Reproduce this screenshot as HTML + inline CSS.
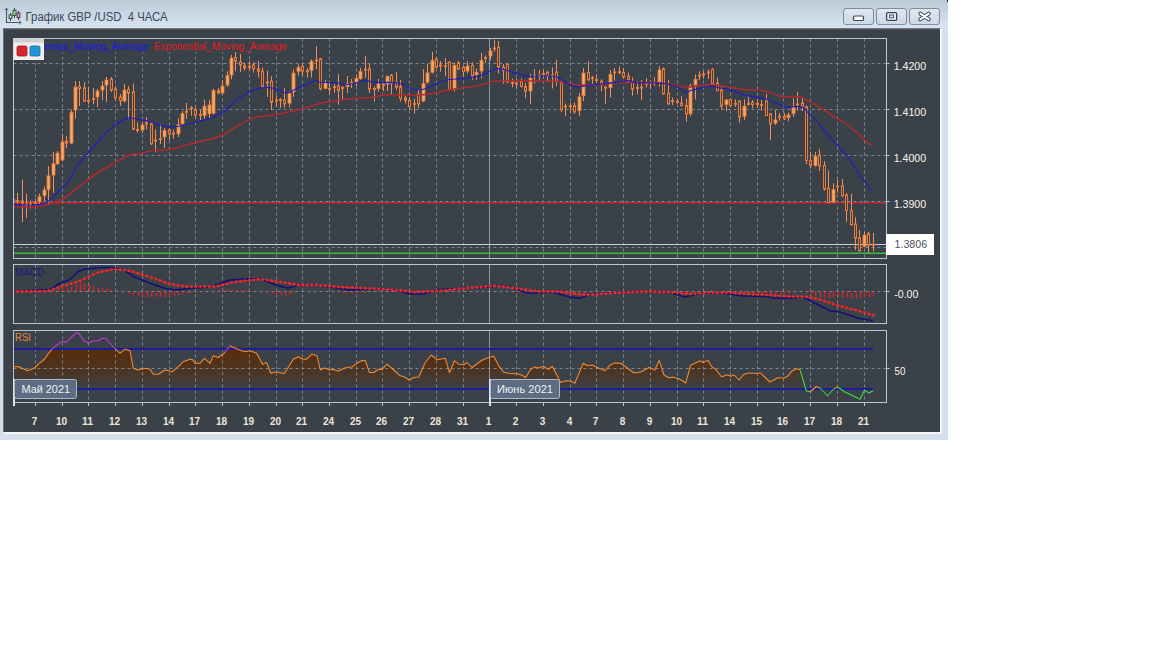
<!DOCTYPE html>
<html><head><meta charset="utf-8">
<style>
html,body{margin:0;padding:0;background:#ffffff;width:1152px;height:648px;overflow:hidden;}
#win{position:absolute;left:0;top:0;width:948px;height:440px;background:#d3dfeb;}
#tb{position:absolute;left:0;top:0;width:948px;height:28px;background:linear-gradient(#bccad8,#d8e4f0);}
#title{position:absolute;left:25px;top:10px;font:12px "Liberation Sans",sans-serif;color:#3c4459;white-space:pre;}
.btn{position:absolute;top:8px;width:29px;height:15px;border:1px solid #7f8a9a;border-radius:3px;background:linear-gradient(#dfe7f0,#cdd9e6);}
#dark{position:absolute;left:3px;top:28px;width:937px;height:404px;background:#3b4148;border-left:1px solid #6c7278;box-sizing:border-box;}
#shade{position:absolute;left:3px;top:28px;width:937px;height:2px;background:linear-gradient(#80858a,#3b4148);}
#wr{position:absolute;left:940px;top:29px;width:2px;height:404px;background:#f4f7fa;}
#wb{position:absolute;left:4px;top:432px;width:938px;height:2px;background:#f4f7fa;}
svg{position:absolute;left:0;top:0;}
text{font-family:"Liberation Sans",sans-serif;}
.pl{font-size:11px;fill:#faf6ec;}
.cp{font-size:11.5px;fill:#4c5262;}
.lg{font-size:11px;}
.ind{font-size:10.5px;}
.ml{font-size:11.5px;fill:#eef2f6;}
.dl{font-size:11px;font-weight:bold;fill:#ece6d8;text-anchor:middle;}
</style></head><body>
<div id="win">
<div id="tb"></div>
<svg width="30" height="30" style="left:0;top:0" viewBox="0 0 30 30">
<path d="M6.5 9 V22.5 H20.5" fill="none" stroke="#4a5566" stroke-width="1.1"/>
<path d="M4.8 10.2 L6.5 8.2 L8.2 10.2 M19.2 20.8 L21.2 22.5 L19.2 24.2" fill="none" stroke="#4a5566" stroke-width="1"/>
<line x1="10.5" y1="13" x2="10.5" y2="21" stroke="#33413c" stroke-width="1"/><rect x="9" y="15" width="3" height="3.6" fill="#a8dcb0" stroke="#2e4a38" stroke-width="0.9"/>
<line x1="14.5" y1="8" x2="14.5" y2="18" stroke="#33413c" stroke-width="1"/><rect x="13" y="10.2" width="3" height="5.4" fill="#9ad2a2" stroke="#2e4a38" stroke-width="0.9"/>
<line x1="18.5" y1="11" x2="18.5" y2="20" stroke="#3e3a40" stroke-width="1"/><rect x="17" y="13" width="3" height="4.6" fill="#c0a0aa" stroke="#4a3842" stroke-width="0.9"/>
</svg>
<svg width="200" height="28" style="left:0;top:0"><text x="25.6" y="21" textLength="142" lengthAdjust="spacingAndGlyphs" style="font-size:12px;fill:#3c4459;white-space:pre" xml:space="preserve">График GBP /USD  4 ЧАСА</text></svg>
<div class="btn" style="left:843px"></div>
<div class="btn" style="left:876px"></div>
<div class="btn" style="left:909px"></div>
<svg width="948" height="30" style="left:0;top:0" viewBox="0 0 948 30">
<rect x="853.5" y="16" width="10" height="4.5" rx="1.3" fill="#ffffff" stroke="#3a4252" stroke-width="1.2"/>
<rect x="886.6" y="12.6" width="10" height="7.8" rx="1.2" fill="#f4f6f8" stroke="#3a4252" stroke-width="1.3"/>
<rect x="889.5" y="15" width="4.2" height="2.8" fill="#dfe4ea" stroke="#3a4252" stroke-width="0.9"/>
<path d="M920.3 13.6 L928.8 19.4 M928.8 13.6 L920.3 19.4" stroke="#3a4252" stroke-width="4" stroke-linecap="round"/>
<path d="M920.3 13.6 L928.8 19.4 M928.8 13.6 L920.3 19.4" stroke="#ffffff" stroke-width="2" stroke-linecap="round"/>
<rect x="947" y="0" width="1" height="2" fill="#202020"/>
</svg>
<div id="dark"></div><div id="shade"></div><div id="wr"></div><div id="wb"></div>
</div>
<svg width="1152" height="648" viewBox="0 0 1152 648">
<defs>
<clipPath id="cm"><rect x="13.5" y="38.5" width="873.0" height="220.0"/></clipPath>
<clipPath id="cmacd"><rect x="13.5" y="264.5" width="873.0" height="59.0"/></clipPath>
<clipPath id="crsi"><rect x="13.5" y="330.5" width="873.0" height="72.0"/></clipPath>
<linearGradient id="rsig" gradientUnits="userSpaceOnUse" x1="0" y1="349" x2="0" y2="390"><stop offset="0" stop-color="#5a2c08" stop-opacity="0.95"/><stop offset="0.45" stop-color="#5a2c08" stop-opacity="0.65"/><stop offset="1" stop-color="#5a2c08" stop-opacity="0.0"/></linearGradient>
<clipPath id="rsiband"><rect x="13" y="349" width="874" height="60"/></clipPath>
</defs>
<g clip-path="url(#cm)">
<line x1="35.5" y1="38.5" x2="35.5" y2="258.5" stroke="#7d8691" stroke-width="1" stroke-dasharray="3,3"/>
<line x1="62.5" y1="38.5" x2="62.5" y2="258.5" stroke="#7d8691" stroke-width="1" stroke-dasharray="3,3"/>
<line x1="88.5" y1="38.5" x2="88.5" y2="258.5" stroke="#7d8691" stroke-width="1" stroke-dasharray="3,3"/>
<line x1="115.5" y1="38.5" x2="115.5" y2="258.5" stroke="#7d8691" stroke-width="1" stroke-dasharray="3,3"/>
<line x1="142.5" y1="38.5" x2="142.5" y2="258.5" stroke="#7d8691" stroke-width="1" stroke-dasharray="3,3"/>
<line x1="169.5" y1="38.5" x2="169.5" y2="258.5" stroke="#7d8691" stroke-width="1" stroke-dasharray="3,3"/>
<line x1="195.5" y1="38.5" x2="195.5" y2="258.5" stroke="#7d8691" stroke-width="1" stroke-dasharray="3,3"/>
<line x1="222.5" y1="38.5" x2="222.5" y2="258.5" stroke="#7d8691" stroke-width="1" stroke-dasharray="3,3"/>
<line x1="249.5" y1="38.5" x2="249.5" y2="258.5" stroke="#7d8691" stroke-width="1" stroke-dasharray="3,3"/>
<line x1="276.5" y1="38.5" x2="276.5" y2="258.5" stroke="#7d8691" stroke-width="1" stroke-dasharray="3,3"/>
<line x1="302.5" y1="38.5" x2="302.5" y2="258.5" stroke="#7d8691" stroke-width="1" stroke-dasharray="3,3"/>
<line x1="329.5" y1="38.5" x2="329.5" y2="258.5" stroke="#7d8691" stroke-width="1" stroke-dasharray="3,3"/>
<line x1="356.5" y1="38.5" x2="356.5" y2="258.5" stroke="#7d8691" stroke-width="1" stroke-dasharray="3,3"/>
<line x1="382.5" y1="38.5" x2="382.5" y2="258.5" stroke="#7d8691" stroke-width="1" stroke-dasharray="3,3"/>
<line x1="409.5" y1="38.5" x2="409.5" y2="258.5" stroke="#7d8691" stroke-width="1" stroke-dasharray="3,3"/>
<line x1="436.5" y1="38.5" x2="436.5" y2="258.5" stroke="#7d8691" stroke-width="1" stroke-dasharray="3,3"/>
<line x1="463.5" y1="38.5" x2="463.5" y2="258.5" stroke="#7d8691" stroke-width="1" stroke-dasharray="3,3"/>
<line x1="489.5" y1="38.5" x2="489.5" y2="258.5" stroke="#7d8691" stroke-width="1" stroke-dasharray="3,3"/>
<line x1="516.5" y1="38.5" x2="516.5" y2="258.5" stroke="#7d8691" stroke-width="1" stroke-dasharray="3,3"/>
<line x1="543.5" y1="38.5" x2="543.5" y2="258.5" stroke="#7d8691" stroke-width="1" stroke-dasharray="3,3"/>
<line x1="570.5" y1="38.5" x2="570.5" y2="258.5" stroke="#7d8691" stroke-width="1" stroke-dasharray="3,3"/>
<line x1="596.5" y1="38.5" x2="596.5" y2="258.5" stroke="#7d8691" stroke-width="1" stroke-dasharray="3,3"/>
<line x1="623.5" y1="38.5" x2="623.5" y2="258.5" stroke="#7d8691" stroke-width="1" stroke-dasharray="3,3"/>
<line x1="650.5" y1="38.5" x2="650.5" y2="258.5" stroke="#7d8691" stroke-width="1" stroke-dasharray="3,3"/>
<line x1="677.5" y1="38.5" x2="677.5" y2="258.5" stroke="#7d8691" stroke-width="1" stroke-dasharray="3,3"/>
<line x1="703.5" y1="38.5" x2="703.5" y2="258.5" stroke="#7d8691" stroke-width="1" stroke-dasharray="3,3"/>
<line x1="730.5" y1="38.5" x2="730.5" y2="258.5" stroke="#7d8691" stroke-width="1" stroke-dasharray="3,3"/>
<line x1="757.5" y1="38.5" x2="757.5" y2="258.5" stroke="#7d8691" stroke-width="1" stroke-dasharray="3,3"/>
<line x1="783.5" y1="38.5" x2="783.5" y2="258.5" stroke="#7d8691" stroke-width="1" stroke-dasharray="3,3"/>
<line x1="810.5" y1="38.5" x2="810.5" y2="258.5" stroke="#7d8691" stroke-width="1" stroke-dasharray="3,3"/>
<line x1="837.5" y1="38.5" x2="837.5" y2="258.5" stroke="#7d8691" stroke-width="1" stroke-dasharray="3,3"/>
<line x1="864.5" y1="38.5" x2="864.5" y2="258.5" stroke="#7d8691" stroke-width="1" stroke-dasharray="3,3"/>
<line x1="13.5" y1="63.5" x2="886.5" y2="63.5" stroke="#7d8691" stroke-width="1" stroke-dasharray="3,3"/>
<line x1="13.5" y1="109.5" x2="886.5" y2="109.5" stroke="#7d8691" stroke-width="1" stroke-dasharray="3,3"/>
<line x1="13.5" y1="155.5" x2="886.5" y2="155.5" stroke="#7d8691" stroke-width="1" stroke-dasharray="3,3"/>
<line x1="13.5" y1="201.5" x2="886.5" y2="201.5" stroke="#7d8691" stroke-width="1" stroke-dasharray="3,3"/>
<line x1="13.5" y1="247.5" x2="886.5" y2="247.5" stroke="#7d8691" stroke-width="1" stroke-dasharray="3,3"/>
<line x1="489.5" y1="38.5" x2="489.5" y2="258.5" stroke="#8a96a2" stroke-width="1"/>
<line x1="13.5" y1="202.8" x2="886.5" y2="202.8" stroke="#c42a2a" stroke-width="1.6"/>
<line x1="13.5" y1="244.5" x2="886.5" y2="244.5" stroke="#c9ced4" stroke-width="1"/>
<line x1="13.5" y1="253.3" x2="886.5" y2="253.3" stroke="#38c038" stroke-width="1.6"/>
<line x1="13.5" y1="193.7" x2="13.5" y2="206.7" stroke="#f0905a" stroke-width="1"/>
<rect x="12" y="199.0" width="3" height="2" fill="#ec7a36"/>
<line x1="17.5" y1="193.0" x2="17.5" y2="204.0" stroke="#f0905a" stroke-width="1"/>
<rect x="16" y="200.0" width="3" height="2" fill="#ec7a36"/>
<line x1="22.5" y1="179.5" x2="22.5" y2="222.0" stroke="#f0905a" stroke-width="1"/>
<rect x="21.5" y="201.0" width="2" height="2.0" fill="#3b4148" stroke="#ec7a36" stroke-width="1"/>
<line x1="26.5" y1="193.7" x2="26.5" y2="217.8" stroke="#f0905a" stroke-width="1"/>
<rect x="25" y="204.0" width="3" height="2" fill="#ec7a36"/>
<line x1="30.5" y1="200.5" x2="30.5" y2="208.5" stroke="#f0905a" stroke-width="1"/>
<rect x="29" y="203.0" width="3" height="2" fill="#ec7a36"/>
<line x1="35.5" y1="199.0" x2="35.5" y2="205.5" stroke="#f0905a" stroke-width="1"/>
<rect x="34" y="202.0" width="3" height="2" fill="#ec7a36"/>
<line x1="39.5" y1="193.7" x2="39.5" y2="204.8" stroke="#f0905a" stroke-width="1"/>
<rect x="38" y="196.8" width="3" height="4.9" fill="#f6a866" stroke="#ec7a36" stroke-width="0.8"/>
<line x1="44.5" y1="186.3" x2="44.5" y2="201.7" stroke="#f0905a" stroke-width="1"/>
<rect x="43" y="190.0" width="3" height="5.5" fill="#f6a866" stroke="#ec7a36" stroke-width="0.8"/>
<line x1="48.5" y1="166.0" x2="48.5" y2="205.0" stroke="#f0905a" stroke-width="1"/>
<rect x="47" y="175.8" width="3" height="13.6" fill="#f6a866" stroke="#ec7a36" stroke-width="0.8"/>
<line x1="53.5" y1="152.0" x2="53.5" y2="193.0" stroke="#f0905a" stroke-width="1"/>
<rect x="52" y="163.8" width="3" height="11.2" fill="#f6a866" stroke="#ec7a36" stroke-width="0.8"/>
<line x1="57.5" y1="151.0" x2="57.5" y2="164.7" stroke="#f0905a" stroke-width="1"/>
<rect x="56" y="153.1" width="3" height="10.7" fill="#f6a866" stroke="#ec7a36" stroke-width="0.8"/>
<line x1="62.5" y1="133.8" x2="62.5" y2="161.2" stroke="#f0905a" stroke-width="1"/>
<rect x="61" y="141.9" width="3" height="18.1" fill="#f6a866" stroke="#ec7a36" stroke-width="0.8"/>
<line x1="66.5" y1="136.2" x2="66.5" y2="148.1" stroke="#f0905a" stroke-width="1"/>
<rect x="65.5" y="141.2" width="2" height="2.0" fill="#3b4148" stroke="#ec7a36" stroke-width="1"/>
<line x1="71.5" y1="109.8" x2="71.5" y2="144.0" stroke="#f0905a" stroke-width="1"/>
<rect x="70" y="112.5" width="3" height="30.6" fill="#f6a866" stroke="#ec7a36" stroke-width="0.8"/>
<line x1="75.5" y1="81.0" x2="75.5" y2="118.5" stroke="#f0905a" stroke-width="1"/>
<rect x="74" y="87.0" width="3" height="23.0" fill="#f6a866" stroke="#ec7a36" stroke-width="0.8"/>
<line x1="79.5" y1="81.0" x2="79.5" y2="106.0" stroke="#f0905a" stroke-width="1"/>
<rect x="78.5" y="86.5" width="2" height="2.0" fill="#3b4148" stroke="#ec7a36" stroke-width="1"/>
<line x1="84.5" y1="82.2" x2="84.5" y2="102.0" stroke="#f0905a" stroke-width="1"/>
<rect x="83.5" y="88.0" width="2" height="13.0" fill="#3b4148" stroke="#ec7a36" stroke-width="1"/>
<line x1="88.5" y1="87.0" x2="88.5" y2="104.0" stroke="#f0905a" stroke-width="1"/>
<rect x="87" y="100.0" width="3" height="2" fill="#ec7a36"/>
<line x1="93.5" y1="88.0" x2="93.5" y2="104.0" stroke="#f0905a" stroke-width="1"/>
<rect x="92" y="98.0" width="3" height="2" fill="#ec7a36"/>
<line x1="97.5" y1="89.0" x2="97.5" y2="107.0" stroke="#f0905a" stroke-width="1"/>
<rect x="96" y="91.0" width="3" height="6.0" fill="#f6a866" stroke="#ec7a36" stroke-width="0.8"/>
<line x1="102.5" y1="81.0" x2="102.5" y2="100.0" stroke="#f0905a" stroke-width="1"/>
<rect x="101" y="86.0" width="3" height="4.0" fill="#f6a866" stroke="#ec7a36" stroke-width="0.8"/>
<line x1="106.5" y1="77.0" x2="106.5" y2="102.0" stroke="#f0905a" stroke-width="1"/>
<rect x="105" y="80.0" width="3" height="5.0" fill="#f6a866" stroke="#ec7a36" stroke-width="0.8"/>
<line x1="111.5" y1="77.0" x2="111.5" y2="92.0" stroke="#f0905a" stroke-width="1"/>
<rect x="110.5" y="79.0" width="2" height="11.0" fill="#3b4148" stroke="#ec7a36" stroke-width="1"/>
<line x1="115.5" y1="86.0" x2="115.5" y2="100.6" stroke="#f0905a" stroke-width="1"/>
<rect x="114.5" y="88.8" width="2" height="9.2" fill="#3b4148" stroke="#ec7a36" stroke-width="1"/>
<line x1="120.5" y1="94.0" x2="120.5" y2="106.0" stroke="#f0905a" stroke-width="1"/>
<rect x="119.5" y="97.0" width="2" height="3.6" fill="#3b4148" stroke="#ec7a36" stroke-width="1"/>
<line x1="124.5" y1="84.0" x2="124.5" y2="102.5" stroke="#f0905a" stroke-width="1"/>
<rect x="123" y="90.0" width="3" height="11.0" fill="#f6a866" stroke="#ec7a36" stroke-width="0.8"/>
<line x1="128.5" y1="86.0" x2="128.5" y2="118.8" stroke="#f0905a" stroke-width="1"/>
<rect x="127.5" y="89.4" width="2" height="3.6" fill="#3b4148" stroke="#ec7a36" stroke-width="1"/>
<line x1="133.5" y1="83.5" x2="133.5" y2="130.0" stroke="#f0905a" stroke-width="1"/>
<rect x="132.5" y="92.0" width="2" height="37.4" fill="#3b4148" stroke="#ec7a36" stroke-width="1"/>
<line x1="137.5" y1="122.5" x2="137.5" y2="132.5" stroke="#f0905a" stroke-width="1"/>
<rect x="136" y="129.0" width="3" height="2" fill="#ec7a36"/>
<line x1="142.5" y1="121.9" x2="142.5" y2="133.1" stroke="#f0905a" stroke-width="1"/>
<rect x="141" y="125.0" width="3" height="5.0" fill="#f6a866" stroke="#ec7a36" stroke-width="0.8"/>
<line x1="146.5" y1="116.9" x2="146.5" y2="129.4" stroke="#f0905a" stroke-width="1"/>
<rect x="145" y="122.5" width="3" height="2" fill="#ec7a36"/>
<line x1="151.5" y1="121.9" x2="151.5" y2="145.0" stroke="#f0905a" stroke-width="1"/>
<rect x="150.5" y="123.8" width="2" height="20.0" fill="#3b4148" stroke="#ec7a36" stroke-width="1"/>
<line x1="155.5" y1="129.4" x2="155.5" y2="152.5" stroke="#f0905a" stroke-width="1"/>
<rect x="154" y="139.6" width="3" height="2" fill="#ec7a36"/>
<line x1="160.5" y1="124.4" x2="160.5" y2="143.8" stroke="#f0905a" stroke-width="1"/>
<rect x="159" y="138.0" width="3" height="2" fill="#ec7a36"/>
<line x1="164.5" y1="128.1" x2="164.5" y2="148.1" stroke="#f0905a" stroke-width="1"/>
<rect x="163" y="130.6" width="3" height="6.3" fill="#f6a866" stroke="#ec7a36" stroke-width="0.8"/>
<line x1="169.5" y1="128.1" x2="169.5" y2="140.0" stroke="#f0905a" stroke-width="1"/>
<rect x="168.5" y="130.0" width="2" height="3.8" fill="#3b4148" stroke="#ec7a36" stroke-width="1"/>
<line x1="173.5" y1="129.4" x2="173.5" y2="138.8" stroke="#f0905a" stroke-width="1"/>
<rect x="172" y="132.8" width="3" height="2" fill="#ec7a36"/>
<line x1="178.5" y1="118.1" x2="178.5" y2="136.9" stroke="#f0905a" stroke-width="1"/>
<rect x="177" y="125.0" width="3" height="8.8" fill="#f6a866" stroke="#ec7a36" stroke-width="0.8"/>
<line x1="182.5" y1="111.2" x2="182.5" y2="125.0" stroke="#f0905a" stroke-width="1"/>
<rect x="181" y="113.8" width="3" height="10.0" fill="#f6a866" stroke="#ec7a36" stroke-width="0.8"/>
<line x1="186.5" y1="103.1" x2="186.5" y2="118.8" stroke="#f0905a" stroke-width="1"/>
<rect x="185" y="110.9" width="3" height="2" fill="#ec7a36"/>
<line x1="191.5" y1="106.2" x2="191.5" y2="115.6" stroke="#f0905a" stroke-width="1"/>
<rect x="190" y="107.1" width="3" height="2" fill="#ec7a36"/>
<line x1="195.5" y1="106.9" x2="195.5" y2="118.1" stroke="#f0905a" stroke-width="1"/>
<rect x="194.5" y="110.0" width="2" height="5.0" fill="#3b4148" stroke="#ec7a36" stroke-width="1"/>
<line x1="200.5" y1="110.0" x2="200.5" y2="120.0" stroke="#f0905a" stroke-width="1"/>
<rect x="199" y="114.0" width="3" height="2" fill="#ec7a36"/>
<line x1="204.5" y1="99.4" x2="204.5" y2="118.8" stroke="#f0905a" stroke-width="1"/>
<rect x="203" y="106.2" width="3" height="9.3" fill="#f6a866" stroke="#ec7a36" stroke-width="0.8"/>
<line x1="209.5" y1="100.0" x2="209.5" y2="118.1" stroke="#f0905a" stroke-width="1"/>
<rect x="208" y="105.0" width="3" height="8.8" fill="#f6a866" stroke="#ec7a36" stroke-width="0.8"/>
<line x1="213.5" y1="88.8" x2="213.5" y2="114.4" stroke="#f0905a" stroke-width="1"/>
<rect x="212" y="90.6" width="3" height="22.5" fill="#f6a866" stroke="#ec7a36" stroke-width="0.8"/>
<line x1="218.5" y1="88.1" x2="218.5" y2="93.8" stroke="#f0905a" stroke-width="1"/>
<rect x="217.5" y="90.6" width="2" height="2.5" fill="#3b4148" stroke="#ec7a36" stroke-width="1"/>
<line x1="222.5" y1="80.0" x2="222.5" y2="93.8" stroke="#f0905a" stroke-width="1"/>
<rect x="221" y="86.2" width="3" height="6.8" fill="#f6a866" stroke="#ec7a36" stroke-width="0.8"/>
<line x1="227.5" y1="71.2" x2="227.5" y2="86.9" stroke="#f0905a" stroke-width="1"/>
<rect x="226" y="75.6" width="3" height="9.4" fill="#f6a866" stroke="#ec7a36" stroke-width="0.8"/>
<line x1="231.5" y1="55.0" x2="231.5" y2="79.4" stroke="#f0905a" stroke-width="1"/>
<rect x="230" y="58.1" width="3" height="16.9" fill="#f6a866" stroke="#ec7a36" stroke-width="0.8"/>
<line x1="235.5" y1="51.9" x2="235.5" y2="71.2" stroke="#f0905a" stroke-width="1"/>
<rect x="234.5" y="57.5" width="2" height="3.8" fill="#3b4148" stroke="#ec7a36" stroke-width="1"/>
<line x1="240.5" y1="53.8" x2="240.5" y2="71.9" stroke="#f0905a" stroke-width="1"/>
<rect x="239.5" y="61.9" width="2" height="3.1" fill="#3b4148" stroke="#ec7a36" stroke-width="1"/>
<line x1="244.5" y1="62.5" x2="244.5" y2="70.6" stroke="#f0905a" stroke-width="1"/>
<rect x="243.5" y="65.6" width="2" height="2.5" fill="#3b4148" stroke="#ec7a36" stroke-width="1"/>
<line x1="249.5" y1="61.2" x2="249.5" y2="70.6" stroke="#f0905a" stroke-width="1"/>
<rect x="248" y="65.9" width="3" height="2" fill="#ec7a36"/>
<line x1="253.5" y1="62.5" x2="253.5" y2="72.5" stroke="#f0905a" stroke-width="1"/>
<rect x="252.5" y="65.0" width="2" height="3.8" fill="#3b4148" stroke="#ec7a36" stroke-width="1"/>
<line x1="258.5" y1="61.2" x2="258.5" y2="77.5" stroke="#f0905a" stroke-width="1"/>
<rect x="257.5" y="68.8" width="2" height="2.5" fill="#3b4148" stroke="#ec7a36" stroke-width="1"/>
<line x1="262.5" y1="67.5" x2="262.5" y2="87.5" stroke="#f0905a" stroke-width="1"/>
<rect x="261.5" y="71.2" width="2" height="15.7" fill="#3b4148" stroke="#ec7a36" stroke-width="1"/>
<line x1="267.5" y1="70.6" x2="267.5" y2="96.9" stroke="#f0905a" stroke-width="1"/>
<rect x="266" y="81.5" width="3" height="2" fill="#ec7a36"/>
<line x1="271.5" y1="76.2" x2="271.5" y2="110.0" stroke="#f0905a" stroke-width="1"/>
<rect x="270.5" y="81.2" width="2" height="21.2" fill="#3b4148" stroke="#ec7a36" stroke-width="1"/>
<line x1="276.5" y1="96.2" x2="276.5" y2="106.9" stroke="#f0905a" stroke-width="1"/>
<rect x="275" y="99.6" width="3" height="2" fill="#ec7a36"/>
<line x1="280.5" y1="98.1" x2="280.5" y2="108.1" stroke="#f0905a" stroke-width="1"/>
<rect x="279" y="99.0" width="3" height="2" fill="#ec7a36"/>
<line x1="284.5" y1="88.1" x2="284.5" y2="107.5" stroke="#f0905a" stroke-width="1"/>
<rect x="283.5" y="100.0" width="2" height="3.8" fill="#3b4148" stroke="#ec7a36" stroke-width="1"/>
<line x1="289.5" y1="91.2" x2="289.5" y2="107.5" stroke="#f0905a" stroke-width="1"/>
<rect x="288" y="93.8" width="3" height="9.3" fill="#f6a866" stroke="#ec7a36" stroke-width="0.8"/>
<line x1="293.5" y1="69.4" x2="293.5" y2="96.9" stroke="#f0905a" stroke-width="1"/>
<rect x="292" y="73.1" width="3" height="18.8" fill="#f6a866" stroke="#ec7a36" stroke-width="0.8"/>
<line x1="298.5" y1="64.4" x2="298.5" y2="75.6" stroke="#f0905a" stroke-width="1"/>
<rect x="297" y="67.5" width="3" height="3.8" fill="#f6a866" stroke="#ec7a36" stroke-width="0.8"/>
<line x1="302.5" y1="63.5" x2="302.5" y2="75.4" stroke="#f0905a" stroke-width="1"/>
<rect x="301.5" y="66.2" width="2" height="5.0" fill="#3b4148" stroke="#ec7a36" stroke-width="1"/>
<line x1="307.5" y1="68.1" x2="307.5" y2="77.5" stroke="#f0905a" stroke-width="1"/>
<rect x="306" y="70.2" width="3" height="2" fill="#ec7a36"/>
<line x1="311.5" y1="59.4" x2="311.5" y2="77.5" stroke="#f0905a" stroke-width="1"/>
<rect x="310" y="61.2" width="3" height="9.3" fill="#f6a866" stroke="#ec7a36" stroke-width="0.8"/>
<line x1="316.5" y1="46.2" x2="316.5" y2="69.4" stroke="#f0905a" stroke-width="1"/>
<rect x="315" y="59.6" width="3" height="2" fill="#ec7a36"/>
<line x1="320.5" y1="58.0" x2="320.5" y2="90.4" stroke="#f0905a" stroke-width="1"/>
<rect x="319.5" y="58.8" width="2" height="30.0" fill="#3b4148" stroke="#ec7a36" stroke-width="1"/>
<line x1="325.5" y1="79.8" x2="325.5" y2="89.1" stroke="#f0905a" stroke-width="1"/>
<rect x="324" y="82.9" width="3" height="5.6" fill="#f6a866" stroke="#ec7a36" stroke-width="0.8"/>
<line x1="329.5" y1="83.0" x2="329.5" y2="94.8" stroke="#f0905a" stroke-width="1"/>
<rect x="328" y="88.0" width="3" height="2" fill="#ec7a36"/>
<line x1="334.5" y1="84.0" x2="334.5" y2="93.0" stroke="#f0905a" stroke-width="1"/>
<rect x="333" y="86.2" width="3" height="2" fill="#ec7a36"/>
<line x1="338.5" y1="74.0" x2="338.5" y2="104.8" stroke="#f0905a" stroke-width="1"/>
<rect x="337.5" y="86.0" width="2" height="4.4" fill="#3b4148" stroke="#ec7a36" stroke-width="1"/>
<line x1="342.5" y1="86.0" x2="342.5" y2="99.8" stroke="#f0905a" stroke-width="1"/>
<rect x="341" y="87.0" width="3" height="2" fill="#ec7a36"/>
<line x1="347.5" y1="76.0" x2="347.5" y2="92.9" stroke="#f0905a" stroke-width="1"/>
<rect x="346" y="84.0" width="3" height="2.6" fill="#f6a866" stroke="#ec7a36" stroke-width="0.8"/>
<line x1="351.5" y1="79.0" x2="351.5" y2="88.0" stroke="#f0905a" stroke-width="1"/>
<rect x="350" y="82.0" width="3" height="2" fill="#ec7a36"/>
<line x1="356.5" y1="75.4" x2="356.5" y2="86.0" stroke="#f0905a" stroke-width="1"/>
<rect x="355" y="78.5" width="3" height="3.8" fill="#f6a866" stroke="#ec7a36" stroke-width="0.8"/>
<line x1="360.5" y1="68.0" x2="360.5" y2="79.8" stroke="#f0905a" stroke-width="1"/>
<rect x="359" y="71.6" width="3" height="6.9" fill="#f6a866" stroke="#ec7a36" stroke-width="0.8"/>
<line x1="365.5" y1="56.0" x2="365.5" y2="78.0" stroke="#f0905a" stroke-width="1"/>
<rect x="364" y="68.8" width="3" height="2" fill="#ec7a36"/>
<line x1="369.5" y1="64.0" x2="369.5" y2="93.0" stroke="#f0905a" stroke-width="1"/>
<rect x="368.5" y="69.0" width="2" height="20.0" fill="#3b4148" stroke="#ec7a36" stroke-width="1"/>
<line x1="374.5" y1="86.6" x2="374.5" y2="101.6" stroke="#f0905a" stroke-width="1"/>
<rect x="373" y="88.0" width="3" height="2" fill="#ec7a36"/>
<line x1="378.5" y1="79.0" x2="378.5" y2="91.6" stroke="#f0905a" stroke-width="1"/>
<rect x="377" y="84.0" width="3" height="4.5" fill="#f6a866" stroke="#ec7a36" stroke-width="0.8"/>
<line x1="383.5" y1="82.2" x2="383.5" y2="91.0" stroke="#f0905a" stroke-width="1"/>
<rect x="382" y="83.8" width="3" height="2" fill="#ec7a36"/>
<line x1="387.5" y1="75.4" x2="387.5" y2="91.0" stroke="#f0905a" stroke-width="1"/>
<rect x="386" y="76.6" width="3" height="7.4" fill="#f6a866" stroke="#ec7a36" stroke-width="0.8"/>
<line x1="391.5" y1="74.0" x2="391.5" y2="94.0" stroke="#f0905a" stroke-width="1"/>
<rect x="390.5" y="75.4" width="2" height="8.1" fill="#3b4148" stroke="#ec7a36" stroke-width="1"/>
<line x1="396.5" y1="72.0" x2="396.5" y2="89.8" stroke="#f0905a" stroke-width="1"/>
<rect x="395.5" y="82.2" width="2" height="5.0" fill="#3b4148" stroke="#ec7a36" stroke-width="1"/>
<line x1="400.5" y1="80.0" x2="400.5" y2="101.6" stroke="#f0905a" stroke-width="1"/>
<rect x="399.5" y="86.6" width="2" height="11.9" fill="#3b4148" stroke="#ec7a36" stroke-width="1"/>
<line x1="405.5" y1="95.4" x2="405.5" y2="103.5" stroke="#f0905a" stroke-width="1"/>
<rect x="404.5" y="97.9" width="2" height="2.5" fill="#3b4148" stroke="#ec7a36" stroke-width="1"/>
<line x1="409.5" y1="97.0" x2="409.5" y2="109.8" stroke="#f0905a" stroke-width="1"/>
<rect x="408.5" y="100.4" width="2" height="6.2" fill="#3b4148" stroke="#ec7a36" stroke-width="1"/>
<line x1="414.5" y1="98.5" x2="414.5" y2="113.5" stroke="#f0905a" stroke-width="1"/>
<rect x="413" y="103.0" width="3" height="2" fill="#ec7a36"/>
<line x1="418.5" y1="89.0" x2="418.5" y2="108.5" stroke="#f0905a" stroke-width="1"/>
<rect x="417.5" y="94.0" width="2" height="10.0" fill="#3b4148" stroke="#ec7a36" stroke-width="1"/>
<line x1="423.5" y1="69.0" x2="423.5" y2="102.0" stroke="#f0905a" stroke-width="1"/>
<rect x="422" y="83.5" width="3" height="17.5" fill="#f6a866" stroke="#ec7a36" stroke-width="0.8"/>
<line x1="427.5" y1="64.0" x2="427.5" y2="83.5" stroke="#f0905a" stroke-width="1"/>
<rect x="426" y="72.9" width="3" height="9.3" fill="#f6a866" stroke="#ec7a36" stroke-width="0.8"/>
<line x1="432.5" y1="52.0" x2="432.5" y2="73.5" stroke="#f0905a" stroke-width="1"/>
<rect x="431" y="60.4" width="3" height="11.9" fill="#f6a866" stroke="#ec7a36" stroke-width="0.8"/>
<line x1="436.5" y1="57.9" x2="436.5" y2="68.5" stroke="#f0905a" stroke-width="1"/>
<rect x="435.5" y="59.0" width="2" height="8.2" fill="#3b4148" stroke="#ec7a36" stroke-width="1"/>
<line x1="440.5" y1="61.0" x2="440.5" y2="71.6" stroke="#f0905a" stroke-width="1"/>
<rect x="439" y="64.4" width="3" height="2" fill="#ec7a36"/>
<line x1="445.5" y1="58.0" x2="445.5" y2="76.0" stroke="#f0905a" stroke-width="1"/>
<rect x="444" y="65.0" width="3" height="2" fill="#ec7a36"/>
<line x1="449.5" y1="61.0" x2="449.5" y2="90.4" stroke="#f0905a" stroke-width="1"/>
<rect x="448.5" y="62.2" width="2" height="27.5" fill="#3b4148" stroke="#ec7a36" stroke-width="1"/>
<line x1="454.5" y1="62.2" x2="454.5" y2="91.6" stroke="#f0905a" stroke-width="1"/>
<rect x="453" y="65.4" width="3" height="23.6" fill="#f6a866" stroke="#ec7a36" stroke-width="0.8"/>
<line x1="458.5" y1="61.0" x2="458.5" y2="69.8" stroke="#f0905a" stroke-width="1"/>
<rect x="457.5" y="62.9" width="2" height="6.1" fill="#3b4148" stroke="#ec7a36" stroke-width="1"/>
<line x1="463.5" y1="66.0" x2="463.5" y2="76.0" stroke="#f0905a" stroke-width="1"/>
<rect x="462.5" y="67.2" width="2" height="4.3" fill="#3b4148" stroke="#ec7a36" stroke-width="1"/>
<line x1="467.5" y1="61.0" x2="467.5" y2="73.5" stroke="#f0905a" stroke-width="1"/>
<rect x="466" y="66.0" width="3" height="5.0" fill="#f6a866" stroke="#ec7a36" stroke-width="0.8"/>
<line x1="472.5" y1="62.2" x2="472.5" y2="79.8" stroke="#f0905a" stroke-width="1"/>
<rect x="471.5" y="65.4" width="2" height="10.6" fill="#3b4148" stroke="#ec7a36" stroke-width="1"/>
<line x1="476.5" y1="68.5" x2="476.5" y2="79.8" stroke="#f0905a" stroke-width="1"/>
<rect x="475" y="72.2" width="3" height="2.5" fill="#f6a866" stroke="#ec7a36" stroke-width="0.8"/>
<line x1="481.5" y1="52.9" x2="481.5" y2="78.5" stroke="#f0905a" stroke-width="1"/>
<rect x="480" y="60.4" width="3" height="10.6" fill="#f6a866" stroke="#ec7a36" stroke-width="0.8"/>
<line x1="485.5" y1="55.4" x2="485.5" y2="62.9" stroke="#f0905a" stroke-width="1"/>
<rect x="484" y="57.0" width="3" height="2" fill="#ec7a36"/>
<line x1="490.5" y1="47.9" x2="490.5" y2="60.4" stroke="#f0905a" stroke-width="1"/>
<rect x="489" y="51.0" width="3" height="5.0" fill="#f6a866" stroke="#ec7a36" stroke-width="0.8"/>
<line x1="494.5" y1="39.8" x2="494.5" y2="51.6" stroke="#f0905a" stroke-width="1"/>
<rect x="493" y="47.5" width="3" height="2" fill="#ec7a36"/>
<line x1="498.5" y1="41.0" x2="498.5" y2="73.5" stroke="#f0905a" stroke-width="1"/>
<rect x="497.5" y="47.2" width="2" height="20.0" fill="#3b4148" stroke="#ec7a36" stroke-width="1"/>
<line x1="503.5" y1="64.0" x2="503.5" y2="83.5" stroke="#f0905a" stroke-width="1"/>
<rect x="502.5" y="67.2" width="2" height="3.2" fill="#3b4148" stroke="#ec7a36" stroke-width="1"/>
<line x1="507.5" y1="63.5" x2="507.5" y2="82.9" stroke="#f0905a" stroke-width="1"/>
<rect x="506.5" y="64.0" width="2" height="18.2" fill="#3b4148" stroke="#ec7a36" stroke-width="1"/>
<line x1="512.5" y1="78.5" x2="512.5" y2="87.2" stroke="#f0905a" stroke-width="1"/>
<rect x="511" y="82.0" width="3" height="2" fill="#ec7a36"/>
<line x1="516.5" y1="78.5" x2="516.5" y2="88.5" stroke="#f0905a" stroke-width="1"/>
<rect x="515" y="82.5" width="3" height="2" fill="#ec7a36"/>
<line x1="521.5" y1="78.5" x2="521.5" y2="87.2" stroke="#f0905a" stroke-width="1"/>
<rect x="520.5" y="81.0" width="2" height="5.6" fill="#3b4148" stroke="#ec7a36" stroke-width="1"/>
<line x1="525.5" y1="83.0" x2="525.5" y2="98.0" stroke="#f0905a" stroke-width="1"/>
<rect x="524.5" y="86.6" width="2" height="4.4" fill="#3b4148" stroke="#ec7a36" stroke-width="1"/>
<line x1="530.5" y1="74.0" x2="530.5" y2="104.0" stroke="#f0905a" stroke-width="1"/>
<rect x="529" y="78.5" width="3" height="12.5" fill="#f6a866" stroke="#ec7a36" stroke-width="0.8"/>
<line x1="534.5" y1="69.0" x2="534.5" y2="83.5" stroke="#f0905a" stroke-width="1"/>
<rect x="533" y="75.0" width="3" height="2" fill="#ec7a36"/>
<line x1="539.5" y1="69.8" x2="539.5" y2="79.8" stroke="#f0905a" stroke-width="1"/>
<rect x="538" y="75.0" width="3" height="2" fill="#ec7a36"/>
<line x1="543.5" y1="69.8" x2="543.5" y2="78.5" stroke="#f0905a" stroke-width="1"/>
<rect x="542" y="73.0" width="3" height="2" fill="#ec7a36"/>
<line x1="547.5" y1="71.0" x2="547.5" y2="81.0" stroke="#f0905a" stroke-width="1"/>
<rect x="546.5" y="72.2" width="2" height="4.3" fill="#3b4148" stroke="#ec7a36" stroke-width="1"/>
<line x1="552.5" y1="67.2" x2="552.5" y2="88.5" stroke="#f0905a" stroke-width="1"/>
<rect x="551" y="74.5" width="3" height="2" fill="#ec7a36"/>
<line x1="556.5" y1="59.8" x2="556.5" y2="86.0" stroke="#f0905a" stroke-width="1"/>
<rect x="555.5" y="72.2" width="2" height="9.3" fill="#3b4148" stroke="#ec7a36" stroke-width="1"/>
<line x1="561.5" y1="80.4" x2="561.5" y2="112.2" stroke="#f0905a" stroke-width="1"/>
<rect x="560.5" y="82.2" width="2" height="27.5" fill="#3b4148" stroke="#ec7a36" stroke-width="1"/>
<line x1="565.5" y1="103.5" x2="565.5" y2="116.0" stroke="#f0905a" stroke-width="1"/>
<rect x="564" y="105.6" width="3" height="2" fill="#ec7a36"/>
<line x1="570.5" y1="102.5" x2="570.5" y2="112.5" stroke="#f0905a" stroke-width="1"/>
<rect x="569" y="105.2" width="3" height="2" fill="#ec7a36"/>
<line x1="574.5" y1="102.5" x2="574.5" y2="113.8" stroke="#f0905a" stroke-width="1"/>
<rect x="573.5" y="105.6" width="2" height="6.3" fill="#3b4148" stroke="#ec7a36" stroke-width="1"/>
<line x1="579.5" y1="93.0" x2="579.5" y2="116.2" stroke="#f0905a" stroke-width="1"/>
<rect x="578" y="96.9" width="3" height="13.7" fill="#f6a866" stroke="#ec7a36" stroke-width="0.8"/>
<line x1="583.5" y1="68.0" x2="583.5" y2="101.2" stroke="#f0905a" stroke-width="1"/>
<rect x="582" y="73.0" width="3" height="22.6" fill="#f6a866" stroke="#ec7a36" stroke-width="0.8"/>
<line x1="588.5" y1="61.2" x2="588.5" y2="80.6" stroke="#f0905a" stroke-width="1"/>
<rect x="587.5" y="72.5" width="2" height="7.5" fill="#3b4148" stroke="#ec7a36" stroke-width="1"/>
<line x1="592.5" y1="76.0" x2="592.5" y2="83.8" stroke="#f0905a" stroke-width="1"/>
<rect x="591" y="77.0" width="3" height="2" fill="#ec7a36"/>
<line x1="596.5" y1="74.4" x2="596.5" y2="82.5" stroke="#f0905a" stroke-width="1"/>
<rect x="595" y="79.0" width="3" height="2" fill="#ec7a36"/>
<line x1="601.5" y1="79.4" x2="601.5" y2="91.2" stroke="#f0905a" stroke-width="1"/>
<rect x="600.5" y="81.2" width="2" height="3.2" fill="#3b4148" stroke="#ec7a36" stroke-width="1"/>
<line x1="605.5" y1="86.2" x2="605.5" y2="103.8" stroke="#f0905a" stroke-width="1"/>
<rect x="604" y="86.5" width="3" height="2" fill="#ec7a36"/>
<line x1="610.5" y1="70.0" x2="610.5" y2="97.5" stroke="#f0905a" stroke-width="1"/>
<rect x="609" y="74.4" width="3" height="13.1" fill="#f6a866" stroke="#ec7a36" stroke-width="0.8"/>
<line x1="614.5" y1="68.0" x2="614.5" y2="80.6" stroke="#f0905a" stroke-width="1"/>
<rect x="613" y="71.5" width="3" height="2" fill="#ec7a36"/>
<line x1="619.5" y1="66.2" x2="619.5" y2="74.4" stroke="#f0905a" stroke-width="1"/>
<rect x="618" y="71.0" width="3" height="2" fill="#ec7a36"/>
<line x1="623.5" y1="68.0" x2="623.5" y2="78.8" stroke="#f0905a" stroke-width="1"/>
<rect x="622.5" y="72.5" width="2" height="4.4" fill="#3b4148" stroke="#ec7a36" stroke-width="1"/>
<line x1="628.5" y1="72.5" x2="628.5" y2="81.9" stroke="#f0905a" stroke-width="1"/>
<rect x="627.5" y="76.2" width="2" height="3.8" fill="#3b4148" stroke="#ec7a36" stroke-width="1"/>
<line x1="632.5" y1="77.5" x2="632.5" y2="95.6" stroke="#f0905a" stroke-width="1"/>
<rect x="631.5" y="82.5" width="2" height="6.9" fill="#3b4148" stroke="#ec7a36" stroke-width="1"/>
<line x1="637.5" y1="81.2" x2="637.5" y2="94.4" stroke="#f0905a" stroke-width="1"/>
<rect x="636" y="87.0" width="3" height="2" fill="#ec7a36"/>
<line x1="641.5" y1="80.0" x2="641.5" y2="100.0" stroke="#f0905a" stroke-width="1"/>
<rect x="640" y="86.5" width="3" height="2" fill="#ec7a36"/>
<line x1="646.5" y1="78.0" x2="646.5" y2="87.5" stroke="#f0905a" stroke-width="1"/>
<rect x="645" y="82.8" width="3" height="2" fill="#ec7a36"/>
<line x1="650.5" y1="80.6" x2="650.5" y2="88.1" stroke="#f0905a" stroke-width="1"/>
<rect x="649" y="82.1" width="3" height="2" fill="#ec7a36"/>
<line x1="654.5" y1="76.9" x2="654.5" y2="85.6" stroke="#f0905a" stroke-width="1"/>
<rect x="653" y="82.1" width="3" height="2" fill="#ec7a36"/>
<line x1="659.5" y1="66.2" x2="659.5" y2="86.9" stroke="#f0905a" stroke-width="1"/>
<rect x="658" y="70.0" width="3" height="11.9" fill="#f6a866" stroke="#ec7a36" stroke-width="0.8"/>
<line x1="663.5" y1="67.5" x2="663.5" y2="95.0" stroke="#f0905a" stroke-width="1"/>
<rect x="662.5" y="68.8" width="2" height="25.0" fill="#3b4148" stroke="#ec7a36" stroke-width="1"/>
<line x1="668.5" y1="80.0" x2="668.5" y2="105.0" stroke="#f0905a" stroke-width="1"/>
<rect x="667.5" y="93.1" width="2" height="10.7" fill="#3b4148" stroke="#ec7a36" stroke-width="1"/>
<line x1="672.5" y1="97.5" x2="672.5" y2="105.0" stroke="#f0905a" stroke-width="1"/>
<rect x="671" y="100.0" width="3" height="2" fill="#ec7a36"/>
<line x1="677.5" y1="98.8" x2="677.5" y2="103.8" stroke="#f0905a" stroke-width="1"/>
<rect x="676" y="100.9" width="3" height="2" fill="#ec7a36"/>
<line x1="681.5" y1="96.2" x2="681.5" y2="106.2" stroke="#f0905a" stroke-width="1"/>
<rect x="680.5" y="103.1" width="2" height="2.5" fill="#3b4148" stroke="#ec7a36" stroke-width="1"/>
<line x1="686.5" y1="98.8" x2="686.5" y2="121.9" stroke="#f0905a" stroke-width="1"/>
<rect x="685.5" y="105.6" width="2" height="8.2" fill="#3b4148" stroke="#ec7a36" stroke-width="1"/>
<line x1="690.5" y1="83.8" x2="690.5" y2="116.2" stroke="#f0905a" stroke-width="1"/>
<rect x="689" y="86.2" width="3" height="27.5" fill="#f6a866" stroke="#ec7a36" stroke-width="0.8"/>
<line x1="695.5" y1="74.4" x2="695.5" y2="99.4" stroke="#f0905a" stroke-width="1"/>
<rect x="694" y="79.4" width="3" height="5.6" fill="#f6a866" stroke="#ec7a36" stroke-width="0.8"/>
<line x1="699.5" y1="71.2" x2="699.5" y2="80.0" stroke="#f0905a" stroke-width="1"/>
<rect x="698" y="74.6" width="3" height="2" fill="#ec7a36"/>
<line x1="703.5" y1="71.2" x2="703.5" y2="78.8" stroke="#f0905a" stroke-width="1"/>
<rect x="702" y="73.4" width="3" height="2" fill="#ec7a36"/>
<line x1="708.5" y1="69.4" x2="708.5" y2="78.8" stroke="#f0905a" stroke-width="1"/>
<rect x="707" y="71.5" width="3" height="2" fill="#ec7a36"/>
<line x1="712.5" y1="68.1" x2="712.5" y2="84.4" stroke="#f0905a" stroke-width="1"/>
<rect x="711.5" y="69.4" width="2" height="14.3" fill="#3b4148" stroke="#ec7a36" stroke-width="1"/>
<line x1="717.5" y1="77.5" x2="717.5" y2="91.2" stroke="#f0905a" stroke-width="1"/>
<rect x="716.5" y="83.1" width="2" height="7.5" fill="#3b4148" stroke="#ec7a36" stroke-width="1"/>
<line x1="721.5" y1="85.6" x2="721.5" y2="109.4" stroke="#f0905a" stroke-width="1"/>
<rect x="720.5" y="90.0" width="2" height="16.2" fill="#3b4148" stroke="#ec7a36" stroke-width="1"/>
<line x1="726.5" y1="98.8" x2="726.5" y2="111.2" stroke="#f0905a" stroke-width="1"/>
<rect x="725" y="100.0" width="3" height="4.4" fill="#f6a866" stroke="#ec7a36" stroke-width="0.8"/>
<line x1="730.5" y1="98.8" x2="730.5" y2="106.2" stroke="#f0905a" stroke-width="1"/>
<rect x="729.5" y="99.4" width="2" height="6.2" fill="#3b4148" stroke="#ec7a36" stroke-width="1"/>
<line x1="735.5" y1="99.4" x2="735.5" y2="106.9" stroke="#f0905a" stroke-width="1"/>
<rect x="734" y="102.8" width="3" height="2" fill="#ec7a36"/>
<line x1="739.5" y1="100.0" x2="739.5" y2="122.5" stroke="#f0905a" stroke-width="1"/>
<rect x="738.5" y="101.2" width="2" height="15.7" fill="#3b4148" stroke="#ec7a36" stroke-width="1"/>
<line x1="744.5" y1="99.4" x2="744.5" y2="120.0" stroke="#f0905a" stroke-width="1"/>
<rect x="743" y="106.2" width="3" height="10.0" fill="#f6a866" stroke="#ec7a36" stroke-width="0.8"/>
<line x1="748.5" y1="96.2" x2="748.5" y2="105.6" stroke="#f0905a" stroke-width="1"/>
<rect x="747" y="102.8" width="3" height="2" fill="#ec7a36"/>
<line x1="752.5" y1="100.0" x2="752.5" y2="108.1" stroke="#f0905a" stroke-width="1"/>
<rect x="751.5" y="102.5" width="2" height="2.0" fill="#3b4148" stroke="#ec7a36" stroke-width="1"/>
<line x1="757.5" y1="100.0" x2="757.5" y2="108.0" stroke="#f0905a" stroke-width="1"/>
<rect x="756" y="103.0" width="3" height="2" fill="#ec7a36"/>
<line x1="761.5" y1="100.0" x2="761.5" y2="110.6" stroke="#f0905a" stroke-width="1"/>
<rect x="760" y="104.0" width="3" height="2" fill="#ec7a36"/>
<line x1="766.5" y1="93.8" x2="766.5" y2="116.2" stroke="#f0905a" stroke-width="1"/>
<rect x="765.5" y="101.2" width="2" height="14.3" fill="#3b4148" stroke="#ec7a36" stroke-width="1"/>
<line x1="770.5" y1="113.0" x2="770.5" y2="140.0" stroke="#f0905a" stroke-width="1"/>
<rect x="769.5" y="113.8" width="2" height="10.0" fill="#3b4148" stroke="#ec7a36" stroke-width="1"/>
<line x1="775.5" y1="110.0" x2="775.5" y2="125.0" stroke="#f0905a" stroke-width="1"/>
<rect x="774" y="120.0" width="3" height="3.1" fill="#f6a866" stroke="#ec7a36" stroke-width="0.8"/>
<line x1="779.5" y1="113.1" x2="779.5" y2="120.6" stroke="#f0905a" stroke-width="1"/>
<rect x="778" y="115.9" width="3" height="2" fill="#ec7a36"/>
<line x1="784.5" y1="113.1" x2="784.5" y2="120.0" stroke="#f0905a" stroke-width="1"/>
<rect x="783.5" y="116.2" width="2" height="2.5" fill="#3b4148" stroke="#ec7a36" stroke-width="1"/>
<line x1="788.5" y1="112.5" x2="788.5" y2="121.2" stroke="#f0905a" stroke-width="1"/>
<rect x="787" y="115.0" width="3" height="2.5" fill="#f6a866" stroke="#ec7a36" stroke-width="0.8"/>
<line x1="793.5" y1="98.1" x2="793.5" y2="116.9" stroke="#f0905a" stroke-width="1"/>
<rect x="792" y="107.5" width="3" height="6.2" fill="#f6a866" stroke="#ec7a36" stroke-width="0.8"/>
<line x1="797.5" y1="91.9" x2="797.5" y2="110.6" stroke="#f0905a" stroke-width="1"/>
<rect x="796" y="103.4" width="3" height="2" fill="#ec7a36"/>
<line x1="802.5" y1="98.1" x2="802.5" y2="111.2" stroke="#f0905a" stroke-width="1"/>
<rect x="801.5" y="103.0" width="2" height="3.2" fill="#3b4148" stroke="#ec7a36" stroke-width="1"/>
<line x1="806.5" y1="105.5" x2="806.5" y2="164.2" stroke="#f0905a" stroke-width="1"/>
<rect x="805.5" y="106.8" width="2" height="53.7" fill="#3b4148" stroke="#ec7a36" stroke-width="1"/>
<line x1="810.5" y1="151.9" x2="810.5" y2="168.5" stroke="#f0905a" stroke-width="1"/>
<rect x="809.5" y="160.5" width="2" height="4.9" fill="#3b4148" stroke="#ec7a36" stroke-width="1"/>
<line x1="815.5" y1="151.9" x2="815.5" y2="166.7" stroke="#f0905a" stroke-width="1"/>
<rect x="814" y="156.2" width="3" height="9.2" fill="#f6a866" stroke="#ec7a36" stroke-width="0.8"/>
<line x1="819.5" y1="148.8" x2="819.5" y2="171.0" stroke="#f0905a" stroke-width="1"/>
<rect x="818.5" y="155.0" width="2" height="11.0" fill="#3b4148" stroke="#ec7a36" stroke-width="1"/>
<line x1="824.5" y1="161.1" x2="824.5" y2="190.7" stroke="#f0905a" stroke-width="1"/>
<rect x="823.5" y="165.4" width="2" height="23.5" fill="#3b4148" stroke="#ec7a36" stroke-width="1"/>
<line x1="828.5" y1="170.4" x2="828.5" y2="203.1" stroke="#f0905a" stroke-width="1"/>
<rect x="827.5" y="188.3" width="2" height="14.2" fill="#3b4148" stroke="#ec7a36" stroke-width="1"/>
<line x1="833.5" y1="183.3" x2="833.5" y2="203.1" stroke="#f0905a" stroke-width="1"/>
<rect x="832" y="189.5" width="3" height="12.4" fill="#f6a866" stroke="#ec7a36" stroke-width="0.8"/>
<line x1="837.5" y1="179.6" x2="837.5" y2="192.6" stroke="#f0905a" stroke-width="1"/>
<rect x="836" y="185.4" width="3" height="2" fill="#ec7a36"/>
<line x1="842.5" y1="179.0" x2="842.5" y2="196.9" stroke="#f0905a" stroke-width="1"/>
<rect x="841.5" y="185.8" width="2" height="9.9" fill="#3b4148" stroke="#ec7a36" stroke-width="1"/>
<line x1="846.5" y1="193.2" x2="846.5" y2="221.7" stroke="#f0905a" stroke-width="1"/>
<rect x="845.5" y="195.0" width="2" height="15.5" fill="#3b4148" stroke="#ec7a36" stroke-width="1"/>
<line x1="851.5" y1="193.8" x2="851.5" y2="225.4" stroke="#f0905a" stroke-width="1"/>
<rect x="850.5" y="210.5" width="2" height="14.3" fill="#3b4148" stroke="#ec7a36" stroke-width="1"/>
<line x1="855.5" y1="217.2" x2="855.5" y2="250.0" stroke="#f0905a" stroke-width="1"/>
<rect x="854.5" y="224.0" width="2" height="14.4" fill="#3b4148" stroke="#ec7a36" stroke-width="1"/>
<line x1="859.5" y1="230.0" x2="859.5" y2="251.4" stroke="#f0905a" stroke-width="1"/>
<rect x="858.5" y="238.0" width="2" height="12.9" fill="#3b4148" stroke="#ec7a36" stroke-width="1"/>
<line x1="864.5" y1="232.0" x2="864.5" y2="247.2" stroke="#f0905a" stroke-width="1"/>
<rect x="863" y="235.2" width="3" height="11.1" fill="#f6a866" stroke="#ec7a36" stroke-width="0.8"/>
<line x1="868.5" y1="232.0" x2="868.5" y2="252.8" stroke="#f0905a" stroke-width="1"/>
<rect x="867.5" y="233.8" width="2" height="11.6" fill="#3b4148" stroke="#ec7a36" stroke-width="1"/>
<line x1="873.5" y1="232.9" x2="873.5" y2="251.4" stroke="#f0905a" stroke-width="1"/>
<rect x="872" y="243.9" width="3" height="2" fill="#ec7a36"/>
<path d="M13.00,206.70 C16.83,206.70 29.50,207.32 36.00,206.70 C42.50,206.08 47.50,204.28 52.00,203.00 C56.50,201.72 59.33,201.07 63.00,199.00 C66.67,196.93 70.12,193.60 74.00,190.60 C77.88,187.60 82.54,183.81 86.25,181.00 C89.96,178.19 91.46,176.83 96.25,173.75 C101.04,170.67 109.38,165.62 115.00,162.50 C120.62,159.38 125.83,156.46 130.00,155.00 C134.17,153.54 136.25,154.48 140.00,153.75 C143.75,153.02 148.33,151.22 152.50,150.60 C156.67,149.97 160.83,150.42 165.00,150.00 C169.17,149.58 174.33,148.83 177.50,148.10 C180.67,147.37 180.25,146.70 184.00,145.60 C187.75,144.50 194.00,143.05 200.00,141.50 C206.00,139.95 214.33,138.55 220.00,136.30 C225.67,134.05 228.43,131.03 234.00,128.00 C239.57,124.97 246.25,120.37 253.40,118.10 C260.55,115.83 268.77,115.97 276.90,114.40 C285.03,112.83 294.40,110.67 302.20,108.70 C310.00,106.73 317.73,104.00 323.70,102.60 C329.67,101.20 332.82,100.98 338.00,100.30 C343.18,99.62 348.83,99.01 354.75,98.50 C360.67,97.99 368.71,97.88 373.50,97.25 C378.29,96.62 379.33,95.17 383.50,94.75 C387.67,94.33 391.83,94.75 398.50,94.75 C405.17,94.75 414.75,95.58 423.50,94.75 C432.25,93.92 442.25,91.21 451.00,89.75 C459.75,88.29 469.75,87.14 476.00,86.00 C482.25,84.86 484.96,83.73 488.50,82.90 C492.04,82.07 488.92,81.32 497.25,81.00 C505.58,80.68 528.50,80.90 538.50,81.00 C548.50,81.10 552.00,81.18 557.25,81.60 C562.50,82.02 566.46,82.93 570.00,83.50 C573.54,84.07 572.92,84.85 578.50,85.00 C584.08,85.15 597.25,84.78 603.50,84.40 C609.75,84.03 607.67,83.03 616.00,82.75 C624.33,82.47 645.17,82.58 653.50,82.75 C661.83,82.92 660.79,83.06 666.00,83.75 C671.21,84.44 680.58,86.38 684.75,86.90 C688.92,87.43 686.79,87.32 691.00,86.90 C695.21,86.48 703.33,84.30 710.00,84.40 C716.67,84.50 725.42,86.67 731.00,87.50 C736.58,88.33 738.29,88.88 743.50,89.40 C748.71,89.92 756.00,89.46 762.25,90.60 C768.50,91.74 774.54,95.20 781.00,96.25 C787.46,97.30 796.85,96.28 801.00,96.90 C805.15,97.53 803.43,98.67 805.90,100.00 C808.37,101.33 811.28,102.23 815.80,104.90 C820.32,107.57 828.07,112.90 833.00,116.00 C837.93,119.10 841.28,120.62 845.40,123.50 C849.52,126.38 854.42,130.43 857.70,133.30 C860.98,136.17 862.83,138.75 865.10,140.70 C867.37,142.65 870.27,144.28 871.30,145.00" fill="none" stroke="#b02a2e" stroke-width="1.5" stroke-linejoin="round" />
<path d="M13.00,204.80 C16.83,204.80 30.73,205.10 36.00,204.80 C41.27,204.50 42.35,203.72 44.60,203.00 C46.85,202.28 47.03,202.57 49.50,200.50 C51.97,198.43 56.19,193.85 59.40,190.60 C62.61,187.35 65.73,185.27 68.75,181.00 C71.77,176.73 74.38,169.54 77.50,165.00 C80.62,160.46 84.38,157.29 87.50,153.75 C90.62,150.21 93.33,147.08 96.25,143.75 C99.17,140.42 101.88,136.88 105.00,133.75 C108.12,130.62 111.25,127.61 115.00,125.00 C118.75,122.39 124.17,119.14 127.50,118.10 C130.83,117.06 131.88,118.33 135.00,118.75 C138.12,119.17 143.33,119.97 146.25,120.60 C149.17,121.22 150.42,121.77 152.50,122.50 C154.58,123.23 155.62,124.27 158.75,125.00 C161.88,125.73 167.71,126.69 171.25,126.90 C174.79,127.11 177.92,126.57 180.00,126.25 C182.08,125.93 181.25,125.62 183.75,125.00 C186.25,124.38 190.83,123.54 195.00,122.50 C199.17,121.46 205.00,120.00 208.75,118.75 C212.50,117.50 214.38,116.67 217.50,115.00 C220.62,113.33 224.38,111.25 227.50,108.75 C230.62,106.25 232.92,102.61 236.25,100.00 C239.58,97.39 243.96,94.97 247.50,93.10 C251.04,91.22 254.17,89.68 257.50,88.75 C260.83,87.82 264.17,87.39 267.50,87.50 C270.83,87.61 274.58,88.57 277.50,89.40 C280.42,90.23 282.92,92.08 285.00,92.50 C287.08,92.92 287.71,92.73 290.00,91.90 C292.29,91.07 294.38,89.38 298.75,87.50 C303.12,85.62 312.71,81.47 316.25,80.60 C319.79,79.72 316.29,81.87 320.00,82.25 C323.71,82.63 334.58,82.48 338.50,82.90 C342.42,83.32 341.00,84.65 343.50,84.75 C346.00,84.85 349.75,84.22 353.50,83.50 C357.25,82.78 362.67,80.61 366.00,80.40 C369.33,80.19 368.08,81.83 373.50,82.25 C378.92,82.67 392.25,81.86 398.50,82.90 C404.75,83.94 407.67,87.36 411.00,88.50 C414.33,89.64 416.00,89.75 418.50,89.75 C421.00,89.75 421.62,90.06 426.00,88.50 C430.38,86.94 438.50,82.07 444.75,80.40 C451.00,78.73 457.46,79.33 463.50,78.50 C469.54,77.67 475.79,76.97 481.00,75.40 C486.21,73.83 491.42,70.15 494.75,69.10 C498.08,68.05 497.88,68.57 501.00,69.10 C504.12,69.62 509.33,71.10 513.50,72.25 C517.67,73.40 519.75,75.38 526.00,76.00 C532.25,76.62 545.79,75.79 551.00,76.00 C556.21,76.21 555.17,76.42 557.25,77.25 C559.33,78.08 561.38,79.75 563.50,81.00 C565.62,82.25 567.71,83.77 570.00,84.75 C572.29,85.73 573.75,86.86 577.25,86.90 C580.75,86.94 583.92,85.83 591.00,85.00 C598.08,84.17 613.50,82.63 619.75,81.90 C626.00,81.17 625.79,80.50 628.50,80.60 C631.21,80.70 631.83,82.08 636.00,82.50 C640.17,82.92 648.50,82.89 653.50,83.10 C658.50,83.31 661.83,83.02 666.00,83.75 C670.17,84.48 675.17,86.04 678.50,87.50 C681.83,88.96 683.92,91.98 686.00,92.50 C688.08,93.02 688.08,91.43 691.00,90.60 C693.92,89.77 700.17,88.22 703.50,87.50 C706.83,86.78 708.08,86.15 711.00,86.25 C713.92,86.35 717.67,87.47 721.00,88.10 C724.33,88.72 727.25,88.85 731.00,90.00 C734.75,91.15 739.33,93.85 743.50,95.00 C747.67,96.15 752.25,96.28 756.00,96.90 C759.75,97.53 762.67,97.72 766.00,98.75 C769.33,99.78 772.46,101.74 776.00,103.10 C779.54,104.46 782.88,106.27 787.25,106.90 C791.62,107.53 798.52,105.58 802.25,106.90 C805.98,108.22 807.56,112.87 809.60,114.80 C811.64,116.73 811.62,115.42 814.50,118.50 C817.38,121.58 822.78,128.47 826.90,133.30 C831.02,138.13 835.70,143.58 839.20,147.50 C842.70,151.42 844.78,152.68 847.90,156.80 C851.02,160.92 855.00,167.88 857.90,172.20 C860.80,176.52 862.83,179.50 865.30,182.70 C867.77,185.90 871.47,189.95 872.70,191.40" fill="none" stroke="#1a1ad0" stroke-width="1.05" stroke-linejoin="round" />
</g>
<rect x="13.5" y="38.5" width="873.0" height="220.0" fill="none" stroke="#b9c6d3" stroke-width="1"/>
<line x1="886.5" y1="63.5" x2="889.5" y2="63.5" stroke="#b9c6d3" stroke-width="1"/>
<line x1="886.5" y1="109.5" x2="889.5" y2="109.5" stroke="#b9c6d3" stroke-width="1"/>
<line x1="886.5" y1="155.5" x2="889.5" y2="155.5" stroke="#b9c6d3" stroke-width="1"/>
<line x1="886.5" y1="201.5" x2="889.5" y2="201.5" stroke="#b9c6d3" stroke-width="1"/>
<text x="893.7" y="69.5" class="pl" textLength="32.5" lengthAdjust="spacingAndGlyphs">1.4200</text>
<text x="893.7" y="115.5" class="pl" textLength="32.5" lengthAdjust="spacingAndGlyphs">1.4100</text>
<text x="893.7" y="161.5" class="pl" textLength="32.5" lengthAdjust="spacingAndGlyphs">1.4000</text>
<text x="893.7" y="207.5" class="pl" textLength="32.5" lengthAdjust="spacingAndGlyphs">1.3900</text>
<rect x="886" y="234" width="48" height="21" fill="#ffffff"/>
<text x="894.6" y="247.8" class="cp" textLength="32.5" lengthAdjust="spacingAndGlyphs">1.3806</text>
<rect x="14" y="39" width="274" height="13" fill="#3b4148"/>
<text x="15.6" y="49.8" class="lg" fill="#1a1ae6" textLength="133" lengthAdjust="spacingAndGlyphs">Exponential_Moving_Average</text>
<text x="153.9" y="49.8" class="lg" fill="#e01c1c" textLength="133" lengthAdjust="spacingAndGlyphs">Exponential_Moving_Average</text>
<rect x="13.5" y="38.5" width="30.5" height="21.5" fill="#f0efee"/>
<rect x="13.5" y="38.5" width="30.5" height="4" fill="#cfcfcf"/>
<rect x="17" y="46" width="10" height="10" rx="1.5" fill="#d8262e" stroke="#9a1a20" stroke-width="0.8"/>
<rect x="30" y="46" width="10" height="10" rx="1.5" fill="#1f96d6" stroke="#1868a0" stroke-width="0.8"/>
<g clip-path="url(#cmacd)">
<line x1="35.5" y1="264.5" x2="35.5" y2="323.5" stroke="#7d8691" stroke-width="1" stroke-dasharray="3,3"/>
<line x1="62.5" y1="264.5" x2="62.5" y2="323.5" stroke="#7d8691" stroke-width="1" stroke-dasharray="3,3"/>
<line x1="88.5" y1="264.5" x2="88.5" y2="323.5" stroke="#7d8691" stroke-width="1" stroke-dasharray="3,3"/>
<line x1="115.5" y1="264.5" x2="115.5" y2="323.5" stroke="#7d8691" stroke-width="1" stroke-dasharray="3,3"/>
<line x1="142.5" y1="264.5" x2="142.5" y2="323.5" stroke="#7d8691" stroke-width="1" stroke-dasharray="3,3"/>
<line x1="169.5" y1="264.5" x2="169.5" y2="323.5" stroke="#7d8691" stroke-width="1" stroke-dasharray="3,3"/>
<line x1="195.5" y1="264.5" x2="195.5" y2="323.5" stroke="#7d8691" stroke-width="1" stroke-dasharray="3,3"/>
<line x1="222.5" y1="264.5" x2="222.5" y2="323.5" stroke="#7d8691" stroke-width="1" stroke-dasharray="3,3"/>
<line x1="249.5" y1="264.5" x2="249.5" y2="323.5" stroke="#7d8691" stroke-width="1" stroke-dasharray="3,3"/>
<line x1="276.5" y1="264.5" x2="276.5" y2="323.5" stroke="#7d8691" stroke-width="1" stroke-dasharray="3,3"/>
<line x1="302.5" y1="264.5" x2="302.5" y2="323.5" stroke="#7d8691" stroke-width="1" stroke-dasharray="3,3"/>
<line x1="329.5" y1="264.5" x2="329.5" y2="323.5" stroke="#7d8691" stroke-width="1" stroke-dasharray="3,3"/>
<line x1="356.5" y1="264.5" x2="356.5" y2="323.5" stroke="#7d8691" stroke-width="1" stroke-dasharray="3,3"/>
<line x1="382.5" y1="264.5" x2="382.5" y2="323.5" stroke="#7d8691" stroke-width="1" stroke-dasharray="3,3"/>
<line x1="409.5" y1="264.5" x2="409.5" y2="323.5" stroke="#7d8691" stroke-width="1" stroke-dasharray="3,3"/>
<line x1="436.5" y1="264.5" x2="436.5" y2="323.5" stroke="#7d8691" stroke-width="1" stroke-dasharray="3,3"/>
<line x1="463.5" y1="264.5" x2="463.5" y2="323.5" stroke="#7d8691" stroke-width="1" stroke-dasharray="3,3"/>
<line x1="489.5" y1="264.5" x2="489.5" y2="323.5" stroke="#7d8691" stroke-width="1" stroke-dasharray="3,3"/>
<line x1="516.5" y1="264.5" x2="516.5" y2="323.5" stroke="#7d8691" stroke-width="1" stroke-dasharray="3,3"/>
<line x1="543.5" y1="264.5" x2="543.5" y2="323.5" stroke="#7d8691" stroke-width="1" stroke-dasharray="3,3"/>
<line x1="570.5" y1="264.5" x2="570.5" y2="323.5" stroke="#7d8691" stroke-width="1" stroke-dasharray="3,3"/>
<line x1="596.5" y1="264.5" x2="596.5" y2="323.5" stroke="#7d8691" stroke-width="1" stroke-dasharray="3,3"/>
<line x1="623.5" y1="264.5" x2="623.5" y2="323.5" stroke="#7d8691" stroke-width="1" stroke-dasharray="3,3"/>
<line x1="650.5" y1="264.5" x2="650.5" y2="323.5" stroke="#7d8691" stroke-width="1" stroke-dasharray="3,3"/>
<line x1="677.5" y1="264.5" x2="677.5" y2="323.5" stroke="#7d8691" stroke-width="1" stroke-dasharray="3,3"/>
<line x1="703.5" y1="264.5" x2="703.5" y2="323.5" stroke="#7d8691" stroke-width="1" stroke-dasharray="3,3"/>
<line x1="730.5" y1="264.5" x2="730.5" y2="323.5" stroke="#7d8691" stroke-width="1" stroke-dasharray="3,3"/>
<line x1="757.5" y1="264.5" x2="757.5" y2="323.5" stroke="#7d8691" stroke-width="1" stroke-dasharray="3,3"/>
<line x1="783.5" y1="264.5" x2="783.5" y2="323.5" stroke="#7d8691" stroke-width="1" stroke-dasharray="3,3"/>
<line x1="810.5" y1="264.5" x2="810.5" y2="323.5" stroke="#7d8691" stroke-width="1" stroke-dasharray="3,3"/>
<line x1="837.5" y1="264.5" x2="837.5" y2="323.5" stroke="#7d8691" stroke-width="1" stroke-dasharray="3,3"/>
<line x1="864.5" y1="264.5" x2="864.5" y2="323.5" stroke="#7d8691" stroke-width="1" stroke-dasharray="3,3"/>
<line x1="13.5" y1="291.5" x2="886.5" y2="291.5" stroke="#7d8691" stroke-width="1" stroke-dasharray="3,3"/>
<line x1="489.5" y1="264.5" x2="489.5" y2="323.5" stroke="#8a96a2" stroke-width="1"/>
<line x1="40.5" y1="291.5" x2="40.5" y2="290.5" stroke="#d02828" stroke-width="1.4"/>
<line x1="44.5" y1="291.5" x2="44.5" y2="290.4" stroke="#d02828" stroke-width="1.4"/>
<line x1="49.5" y1="291.5" x2="49.5" y2="290.7" stroke="#d02828" stroke-width="1.4"/>
<line x1="53.5" y1="291.5" x2="53.5" y2="290.1" stroke="#d02828" stroke-width="1.4"/>
<line x1="58.5" y1="291.5" x2="58.5" y2="288.8" stroke="#d02828" stroke-width="1.4"/>
<line x1="62.5" y1="291.5" x2="62.5" y2="288.0" stroke="#d02828" stroke-width="1.4"/>
<line x1="67.5" y1="291.5" x2="67.5" y2="287.8" stroke="#d02828" stroke-width="1.4"/>
<line x1="71.5" y1="291.5" x2="71.5" y2="286.9" stroke="#d02828" stroke-width="1.4"/>
<line x1="76.5" y1="291.5" x2="76.5" y2="284.2" stroke="#d02828" stroke-width="1.4"/>
<line x1="80.5" y1="291.5" x2="80.5" y2="282.7" stroke="#d02828" stroke-width="1.4"/>
<line x1="84.5" y1="291.5" x2="84.5" y2="283.0" stroke="#d02828" stroke-width="1.4"/>
<line x1="89.5" y1="291.5" x2="89.5" y2="284.4" stroke="#d02828" stroke-width="1.4"/>
<line x1="93.5" y1="291.5" x2="93.5" y2="285.9" stroke="#d02828" stroke-width="1.4"/>
<line x1="98.5" y1="291.5" x2="98.5" y2="287.4" stroke="#d02828" stroke-width="1.4"/>
<line x1="102.5" y1="291.5" x2="102.5" y2="287.9" stroke="#d02828" stroke-width="1.4"/>
<line x1="107.5" y1="291.5" x2="107.5" y2="288.7" stroke="#d02828" stroke-width="1.4"/>
<line x1="111.5" y1="291.5" x2="111.5" y2="289.5" stroke="#d02828" stroke-width="1.4"/>
<line x1="116.5" y1="291.5" x2="116.5" y2="290.6" stroke="#d02828" stroke-width="1.4"/>
<line x1="129.5" y1="291.5" x2="129.5" y2="294.0" stroke="#d02828" stroke-width="1.4"/>
<line x1="133.5" y1="291.5" x2="133.5" y2="295.3" stroke="#d02828" stroke-width="1.4"/>
<line x1="138.5" y1="291.5" x2="138.5" y2="296.0" stroke="#d02828" stroke-width="1.4"/>
<line x1="142.5" y1="291.5" x2="142.5" y2="296.4" stroke="#d02828" stroke-width="1.4"/>
<line x1="147.5" y1="291.5" x2="147.5" y2="296.8" stroke="#d02828" stroke-width="1.4"/>
<line x1="151.5" y1="291.5" x2="151.5" y2="297.1" stroke="#d02828" stroke-width="1.4"/>
<line x1="156.5" y1="291.5" x2="156.5" y2="297.0" stroke="#d02828" stroke-width="1.4"/>
<line x1="160.5" y1="291.5" x2="160.5" y2="297.0" stroke="#d02828" stroke-width="1.4"/>
<line x1="165.5" y1="291.5" x2="165.5" y2="296.9" stroke="#d02828" stroke-width="1.4"/>
<line x1="169.5" y1="291.5" x2="169.5" y2="296.3" stroke="#d02828" stroke-width="1.4"/>
<line x1="174.5" y1="291.5" x2="174.5" y2="296.1" stroke="#d02828" stroke-width="1.4"/>
<line x1="178.5" y1="291.5" x2="178.5" y2="295.4" stroke="#d02828" stroke-width="1.4"/>
<line x1="182.5" y1="291.5" x2="182.5" y2="294.2" stroke="#d02828" stroke-width="1.4"/>
<line x1="187.5" y1="291.5" x2="187.5" y2="293.4" stroke="#d02828" stroke-width="1.4"/>
<line x1="191.5" y1="291.5" x2="191.5" y2="293.0" stroke="#d02828" stroke-width="1.4"/>
<line x1="196.5" y1="291.5" x2="196.5" y2="292.7" stroke="#d02828" stroke-width="1.4"/>
<line x1="200.5" y1="291.5" x2="200.5" y2="292.5" stroke="#d02828" stroke-width="1.4"/>
<line x1="218.5" y1="291.5" x2="218.5" y2="290.0" stroke="#d02828" stroke-width="1.4"/>
<line x1="223.5" y1="291.5" x2="223.5" y2="289.5" stroke="#d02828" stroke-width="1.4"/>
<line x1="227.5" y1="291.5" x2="227.5" y2="289.0" stroke="#d02828" stroke-width="1.4"/>
<line x1="232.5" y1="291.5" x2="232.5" y2="288.9" stroke="#d02828" stroke-width="1.4"/>
<line x1="236.5" y1="291.5" x2="236.5" y2="289.4" stroke="#d02828" stroke-width="1.4"/>
<line x1="240.5" y1="291.5" x2="240.5" y2="289.7" stroke="#d02828" stroke-width="1.4"/>
<line x1="245.5" y1="291.5" x2="245.5" y2="289.9" stroke="#d02828" stroke-width="1.4"/>
<line x1="249.5" y1="291.5" x2="249.5" y2="290.4" stroke="#d02828" stroke-width="1.4"/>
<line x1="267.5" y1="291.5" x2="267.5" y2="292.9" stroke="#d02828" stroke-width="1.4"/>
<line x1="272.5" y1="291.5" x2="272.5" y2="293.8" stroke="#d02828" stroke-width="1.4"/>
<line x1="276.5" y1="291.5" x2="276.5" y2="294.6" stroke="#d02828" stroke-width="1.4"/>
<line x1="281.5" y1="291.5" x2="281.5" y2="295.2" stroke="#d02828" stroke-width="1.4"/>
<line x1="285.5" y1="291.5" x2="285.5" y2="295.7" stroke="#d02828" stroke-width="1.4"/>
<line x1="289.5" y1="291.5" x2="289.5" y2="295.2" stroke="#d02828" stroke-width="1.4"/>
<line x1="294.5" y1="291.5" x2="294.5" y2="293.3" stroke="#d02828" stroke-width="1.4"/>
<line x1="334.5" y1="291.5" x2="334.5" y2="292.5" stroke="#d02828" stroke-width="1.4"/>
<line x1="339.5" y1="291.5" x2="339.5" y2="292.8" stroke="#d02828" stroke-width="1.4"/>
<line x1="343.5" y1="291.5" x2="343.5" y2="293.1" stroke="#d02828" stroke-width="1.4"/>
<line x1="347.5" y1="291.5" x2="347.5" y2="293.5" stroke="#d02828" stroke-width="1.4"/>
<line x1="352.5" y1="291.5" x2="352.5" y2="293.6" stroke="#d02828" stroke-width="1.4"/>
<line x1="356.5" y1="291.5" x2="356.5" y2="293.2" stroke="#d02828" stroke-width="1.4"/>
<line x1="361.5" y1="291.5" x2="361.5" y2="292.8" stroke="#d02828" stroke-width="1.4"/>
<line x1="365.5" y1="291.5" x2="365.5" y2="292.5" stroke="#d02828" stroke-width="1.4"/>
<line x1="401.5" y1="291.5" x2="401.5" y2="292.4" stroke="#d02828" stroke-width="1.4"/>
<line x1="405.5" y1="291.5" x2="405.5" y2="293.1" stroke="#d02828" stroke-width="1.4"/>
<line x1="410.5" y1="291.5" x2="410.5" y2="293.7" stroke="#d02828" stroke-width="1.4"/>
<line x1="414.5" y1="291.5" x2="414.5" y2="293.4" stroke="#d02828" stroke-width="1.4"/>
<line x1="419.5" y1="291.5" x2="419.5" y2="293.5" stroke="#d02828" stroke-width="1.4"/>
<line x1="423.5" y1="291.5" x2="423.5" y2="293.5" stroke="#d02828" stroke-width="1.4"/>
<line x1="428.5" y1="291.5" x2="428.5" y2="292.7" stroke="#d02828" stroke-width="1.4"/>
<line x1="441.5" y1="291.5" x2="441.5" y2="290.4" stroke="#d02828" stroke-width="1.4"/>
<line x1="445.5" y1="291.5" x2="445.5" y2="290.6" stroke="#d02828" stroke-width="1.4"/>
<line x1="517.5" y1="291.5" x2="517.5" y2="292.4" stroke="#d02828" stroke-width="1.4"/>
<line x1="521.5" y1="291.5" x2="521.5" y2="293.3" stroke="#d02828" stroke-width="1.4"/>
<line x1="526.5" y1="291.5" x2="526.5" y2="294.2" stroke="#d02828" stroke-width="1.4"/>
<line x1="530.5" y1="291.5" x2="530.5" y2="294.1" stroke="#d02828" stroke-width="1.4"/>
<line x1="535.5" y1="291.5" x2="535.5" y2="293.4" stroke="#d02828" stroke-width="1.4"/>
<line x1="539.5" y1="291.5" x2="539.5" y2="292.7" stroke="#d02828" stroke-width="1.4"/>
<line x1="544.5" y1="291.5" x2="544.5" y2="292.4" stroke="#d02828" stroke-width="1.4"/>
<line x1="557.5" y1="291.5" x2="557.5" y2="293.1" stroke="#d02828" stroke-width="1.4"/>
<line x1="561.5" y1="291.5" x2="561.5" y2="294.2" stroke="#d02828" stroke-width="1.4"/>
<line x1="566.5" y1="291.5" x2="566.5" y2="294.8" stroke="#d02828" stroke-width="1.4"/>
<line x1="570.5" y1="291.5" x2="570.5" y2="295.2" stroke="#d02828" stroke-width="1.4"/>
<line x1="575.5" y1="291.5" x2="575.5" y2="295.1" stroke="#d02828" stroke-width="1.4"/>
<line x1="579.5" y1="291.5" x2="579.5" y2="295.1" stroke="#d02828" stroke-width="1.4"/>
<line x1="584.5" y1="291.5" x2="584.5" y2="293.4" stroke="#d02828" stroke-width="1.4"/>
<line x1="673.5" y1="291.5" x2="673.5" y2="292.5" stroke="#d02828" stroke-width="1.4"/>
<line x1="677.5" y1="291.5" x2="677.5" y2="293.3" stroke="#d02828" stroke-width="1.4"/>
<line x1="682.5" y1="291.5" x2="682.5" y2="294.1" stroke="#d02828" stroke-width="1.4"/>
<line x1="686.5" y1="291.5" x2="686.5" y2="294.3" stroke="#d02828" stroke-width="1.4"/>
<line x1="691.5" y1="291.5" x2="691.5" y2="293.0" stroke="#d02828" stroke-width="1.4"/>
<line x1="726.5" y1="291.5" x2="726.5" y2="292.4" stroke="#d02828" stroke-width="1.4"/>
<line x1="731.5" y1="291.5" x2="731.5" y2="293.0" stroke="#d02828" stroke-width="1.4"/>
<line x1="735.5" y1="291.5" x2="735.5" y2="293.4" stroke="#d02828" stroke-width="1.4"/>
<line x1="740.5" y1="291.5" x2="740.5" y2="293.7" stroke="#d02828" stroke-width="1.4"/>
<line x1="744.5" y1="291.5" x2="744.5" y2="293.6" stroke="#d02828" stroke-width="1.4"/>
<line x1="749.5" y1="291.5" x2="749.5" y2="293.4" stroke="#d02828" stroke-width="1.4"/>
<line x1="753.5" y1="291.5" x2="753.5" y2="293.3" stroke="#d02828" stroke-width="1.4"/>
<line x1="758.5" y1="291.5" x2="758.5" y2="293.2" stroke="#d02828" stroke-width="1.4"/>
<line x1="762.5" y1="291.5" x2="762.5" y2="293.1" stroke="#d02828" stroke-width="1.4"/>
<line x1="766.5" y1="291.5" x2="766.5" y2="293.2" stroke="#d02828" stroke-width="1.4"/>
<line x1="771.5" y1="291.5" x2="771.5" y2="293.7" stroke="#d02828" stroke-width="1.4"/>
<line x1="775.5" y1="291.5" x2="775.5" y2="294.1" stroke="#d02828" stroke-width="1.4"/>
<line x1="780.5" y1="291.5" x2="780.5" y2="293.8" stroke="#d02828" stroke-width="1.4"/>
<line x1="784.5" y1="291.5" x2="784.5" y2="293.5" stroke="#d02828" stroke-width="1.4"/>
<line x1="789.5" y1="291.5" x2="789.5" y2="293.2" stroke="#d02828" stroke-width="1.4"/>
<line x1="793.5" y1="291.5" x2="793.5" y2="292.7" stroke="#d02828" stroke-width="1.4"/>
<line x1="807.5" y1="291.5" x2="807.5" y2="293.2" stroke="#d02828" stroke-width="1.4"/>
<line x1="811.5" y1="291.5" x2="811.5" y2="294.6" stroke="#d02828" stroke-width="1.4"/>
<line x1="815.5" y1="291.5" x2="815.5" y2="295.9" stroke="#d02828" stroke-width="1.4"/>
<line x1="820.5" y1="291.5" x2="820.5" y2="297.1" stroke="#d02828" stroke-width="1.4"/>
<line x1="824.5" y1="291.5" x2="824.5" y2="297.8" stroke="#d02828" stroke-width="1.4"/>
<line x1="829.5" y1="291.5" x2="829.5" y2="298.4" stroke="#d02828" stroke-width="1.4"/>
<line x1="833.5" y1="291.5" x2="833.5" y2="298.0" stroke="#d02828" stroke-width="1.4"/>
<line x1="838.5" y1="291.5" x2="838.5" y2="297.3" stroke="#d02828" stroke-width="1.4"/>
<line x1="842.5" y1="291.5" x2="842.5" y2="297.2" stroke="#d02828" stroke-width="1.4"/>
<line x1="847.5" y1="291.5" x2="847.5" y2="297.5" stroke="#d02828" stroke-width="1.4"/>
<line x1="851.5" y1="291.5" x2="851.5" y2="297.8" stroke="#d02828" stroke-width="1.4"/>
<line x1="856.5" y1="291.5" x2="856.5" y2="298.1" stroke="#d02828" stroke-width="1.4"/>
<line x1="860.5" y1="291.5" x2="860.5" y2="298.0" stroke="#d02828" stroke-width="1.4"/>
<line x1="864.5" y1="291.5" x2="864.5" y2="297.6" stroke="#d02828" stroke-width="1.4"/>
<line x1="869.5" y1="291.5" x2="869.5" y2="297.1" stroke="#d02828" stroke-width="1.4"/>
<line x1="873.5" y1="291.5" x2="873.5" y2="296.5" stroke="#d02828" stroke-width="1.4"/>
<polyline points="13.00,291.50 50.00,289.50 60.00,283.25 70.00,279.50 77.50,272.00 85.00,269.00 102.50,267.50 112.50,267.50 122.50,269.50 135.00,277.00 150.00,283.25 165.00,288.25 175.00,290.00 190.00,288.25 210.00,287.00 230.00,280.00 245.00,279.00 260.00,279.00 275.00,284.50 287.50,288.25 300.00,284.50 315.00,285.00 330.00,287.00 350.00,290.00 372.50,289.00 395.00,290.00 410.00,294.00 422.50,294.00 440.00,289.50 465.00,288.25 490.00,287.00 495.00,285.75 510.00,287.00 527.50,293.25 552.50,292.00 565.00,295.75 570.00,297.00 580.00,298.25 590.00,294.50 620.00,292.00 657.50,291.50 670.00,292.50 685.00,297.00 700.00,293.25 720.00,292.50 740.00,295.75 765.00,296.50 775.00,298.25 790.00,298.25 802.50,296.50 812.50,302.00 830.00,310.75 840.00,312.00 858.00,318.25 872.80,320.70" fill="none" stroke="#10107a" stroke-width="1.5" stroke-linejoin="round" />
<polyline points="13.11,291.50 17.57,291.43 22.02,291.37 26.48,291.30 30.94,291.24 35.40,291.17 39.85,291.11 44.31,291.04 48.77,290.46 53.23,289.08 57.68,287.71 62.14,286.33 66.60,284.94 71.06,283.54 75.51,282.15 79.97,280.76 84.43,278.66 88.89,276.56 93.34,274.46 97.80,272.44 102.26,271.55 106.72,270.66 111.17,269.76 115.63,269.07 120.09,269.59 124.55,270.11 129.00,270.63 133.46,271.83 137.92,273.23 142.38,274.62 146.83,276.01 151.29,277.45 155.75,279.01 160.21,280.57 164.66,282.13 169.12,283.69 173.58,284.60 178.04,285.34 182.50,286.08 186.95,286.50 191.41,286.50 195.87,286.50 200.32,286.50 204.78,286.50 209.24,286.50 213.70,286.50 218.15,285.79 222.61,284.79 227.07,283.78 231.53,282.78 235.98,281.88 240.44,281.35 244.90,280.81 249.36,280.28 253.81,279.74 258.27,279.21 262.73,279.41 267.19,280.08 271.64,280.75 276.10,281.42 280.56,282.09 285.02,282.84 289.47,283.58 293.93,284.32 298.39,285.00 302.85,285.00 307.31,285.00 311.76,285.00 316.22,285.10 320.68,285.45 325.13,285.81 329.59,286.17 334.05,286.52 338.51,286.88 342.96,287.15 347.42,287.37 351.88,287.59 356.34,287.82 360.79,288.04 365.25,288.26 369.71,288.52 374.17,288.78 378.62,289.04 383.08,289.30 387.54,289.56 392.00,289.82 396.45,290.15 400.91,290.59 405.37,291.04 409.83,291.48 414.28,291.93 418.74,291.81 423.20,291.59 427.66,291.37 432.11,291.14 436.57,290.92 441.03,290.65 445.49,290.20 449.94,289.76 454.40,289.31 458.86,288.86 463.32,288.42 467.77,288.02 472.23,287.65 476.69,287.28 481.15,286.90 485.60,286.53 490.06,286.16 494.52,285.79 498.98,286.25 503.43,286.80 507.89,287.36 512.35,287.92 516.81,288.48 521.26,289.06 525.72,289.64 530.18,290.22 534.64,290.80 539.09,291.38 543.55,291.50 548.01,291.50 552.47,291.50 556.92,291.50 561.38,291.69 565.84,292.31 570.30,292.93 574.75,293.55 579.21,294.17 583.67,294.81 588.13,294.78 592.58,294.46 597.04,294.14 601.50,293.82 605.96,293.50 610.41,293.18 614.87,292.87 619.33,292.55 623.79,292.35 628.25,292.17 632.70,291.99 637.16,291.81 641.62,291.64 646.07,291.52 650.53,291.61 654.99,291.70 659.45,291.79 663.90,291.88 668.36,291.97 672.82,292.28 677.28,292.73 681.73,293.17 686.19,293.62 690.65,293.95 695.11,293.62 699.56,293.28 704.02,292.95 708.48,292.61 712.94,292.50 717.39,292.50 721.85,292.50 726.31,292.50 730.77,292.56 735.22,292.89 739.68,293.23 744.14,293.56 748.60,293.89 753.05,294.15 757.51,294.38 761.97,294.60 766.43,294.82 770.88,295.07 775.34,295.40 779.80,295.74 784.26,296.07 788.71,296.40 793.17,296.50 797.63,296.50 802.09,296.50 806.54,296.81 811.00,297.70 815.46,298.59 819.92,299.48 824.37,300.96 828.83,302.44 833.29,303.93 837.75,305.25 842.20,306.46 846.66,307.67 851.12,308.88 855.58,310.09 860.03,311.33 864.49,312.60 868.95,313.86 873.41,315.13" fill="none" stroke="#d42424" stroke-width="0.8" stroke-linejoin="round" />
<circle cx="13.11" cy="291.50" r="1.5" fill="#ea2a2a"/>
<circle cx="17.57" cy="291.43" r="1.5" fill="#ea2a2a"/>
<circle cx="22.02" cy="291.37" r="1.5" fill="#ea2a2a"/>
<circle cx="26.48" cy="291.30" r="1.5" fill="#ea2a2a"/>
<circle cx="30.94" cy="291.24" r="1.5" fill="#ea2a2a"/>
<circle cx="35.40" cy="291.17" r="1.5" fill="#ea2a2a"/>
<circle cx="39.85" cy="291.11" r="1.5" fill="#ea2a2a"/>
<circle cx="44.31" cy="291.04" r="1.5" fill="#ea2a2a"/>
<circle cx="48.77" cy="290.46" r="1.5" fill="#ea2a2a"/>
<circle cx="53.23" cy="289.08" r="1.5" fill="#ea2a2a"/>
<circle cx="57.68" cy="287.71" r="1.5" fill="#ea2a2a"/>
<circle cx="62.14" cy="286.33" r="1.5" fill="#ea2a2a"/>
<circle cx="66.60" cy="284.94" r="1.5" fill="#ea2a2a"/>
<circle cx="71.06" cy="283.54" r="1.5" fill="#ea2a2a"/>
<circle cx="75.51" cy="282.15" r="1.5" fill="#ea2a2a"/>
<circle cx="79.97" cy="280.76" r="1.5" fill="#ea2a2a"/>
<circle cx="84.43" cy="278.66" r="1.5" fill="#ea2a2a"/>
<circle cx="88.89" cy="276.56" r="1.5" fill="#ea2a2a"/>
<circle cx="93.34" cy="274.46" r="1.5" fill="#ea2a2a"/>
<circle cx="97.80" cy="272.44" r="1.5" fill="#ea2a2a"/>
<circle cx="102.26" cy="271.55" r="1.5" fill="#ea2a2a"/>
<circle cx="106.72" cy="270.66" r="1.5" fill="#ea2a2a"/>
<circle cx="111.17" cy="269.76" r="1.5" fill="#ea2a2a"/>
<circle cx="115.63" cy="269.07" r="1.5" fill="#ea2a2a"/>
<circle cx="120.09" cy="269.59" r="1.5" fill="#ea2a2a"/>
<circle cx="124.55" cy="270.11" r="1.5" fill="#ea2a2a"/>
<circle cx="129.00" cy="270.63" r="1.5" fill="#ea2a2a"/>
<circle cx="133.46" cy="271.83" r="1.5" fill="#ea2a2a"/>
<circle cx="137.92" cy="273.23" r="1.5" fill="#ea2a2a"/>
<circle cx="142.38" cy="274.62" r="1.5" fill="#ea2a2a"/>
<circle cx="146.83" cy="276.01" r="1.5" fill="#ea2a2a"/>
<circle cx="151.29" cy="277.45" r="1.5" fill="#ea2a2a"/>
<circle cx="155.75" cy="279.01" r="1.5" fill="#ea2a2a"/>
<circle cx="160.21" cy="280.57" r="1.5" fill="#ea2a2a"/>
<circle cx="164.66" cy="282.13" r="1.5" fill="#ea2a2a"/>
<circle cx="169.12" cy="283.69" r="1.5" fill="#ea2a2a"/>
<circle cx="173.58" cy="284.60" r="1.5" fill="#ea2a2a"/>
<circle cx="178.04" cy="285.34" r="1.5" fill="#ea2a2a"/>
<circle cx="182.50" cy="286.08" r="1.5" fill="#ea2a2a"/>
<circle cx="186.95" cy="286.50" r="1.5" fill="#ea2a2a"/>
<circle cx="191.41" cy="286.50" r="1.5" fill="#ea2a2a"/>
<circle cx="195.87" cy="286.50" r="1.5" fill="#ea2a2a"/>
<circle cx="200.32" cy="286.50" r="1.5" fill="#ea2a2a"/>
<circle cx="204.78" cy="286.50" r="1.5" fill="#ea2a2a"/>
<circle cx="209.24" cy="286.50" r="1.5" fill="#ea2a2a"/>
<circle cx="213.70" cy="286.50" r="1.5" fill="#ea2a2a"/>
<circle cx="218.15" cy="285.79" r="1.5" fill="#ea2a2a"/>
<circle cx="222.61" cy="284.79" r="1.5" fill="#ea2a2a"/>
<circle cx="227.07" cy="283.78" r="1.5" fill="#ea2a2a"/>
<circle cx="231.53" cy="282.78" r="1.5" fill="#ea2a2a"/>
<circle cx="235.98" cy="281.88" r="1.5" fill="#ea2a2a"/>
<circle cx="240.44" cy="281.35" r="1.5" fill="#ea2a2a"/>
<circle cx="244.90" cy="280.81" r="1.5" fill="#ea2a2a"/>
<circle cx="249.36" cy="280.28" r="1.5" fill="#ea2a2a"/>
<circle cx="253.81" cy="279.74" r="1.5" fill="#ea2a2a"/>
<circle cx="258.27" cy="279.21" r="1.5" fill="#ea2a2a"/>
<circle cx="262.73" cy="279.41" r="1.5" fill="#ea2a2a"/>
<circle cx="267.19" cy="280.08" r="1.5" fill="#ea2a2a"/>
<circle cx="271.64" cy="280.75" r="1.5" fill="#ea2a2a"/>
<circle cx="276.10" cy="281.42" r="1.5" fill="#ea2a2a"/>
<circle cx="280.56" cy="282.09" r="1.5" fill="#ea2a2a"/>
<circle cx="285.02" cy="282.84" r="1.5" fill="#ea2a2a"/>
<circle cx="289.47" cy="283.58" r="1.5" fill="#ea2a2a"/>
<circle cx="293.93" cy="284.32" r="1.5" fill="#ea2a2a"/>
<circle cx="298.39" cy="285.00" r="1.5" fill="#ea2a2a"/>
<circle cx="302.85" cy="285.00" r="1.5" fill="#ea2a2a"/>
<circle cx="307.31" cy="285.00" r="1.5" fill="#ea2a2a"/>
<circle cx="311.76" cy="285.00" r="1.5" fill="#ea2a2a"/>
<circle cx="316.22" cy="285.10" r="1.5" fill="#ea2a2a"/>
<circle cx="320.68" cy="285.45" r="1.5" fill="#ea2a2a"/>
<circle cx="325.13" cy="285.81" r="1.5" fill="#ea2a2a"/>
<circle cx="329.59" cy="286.17" r="1.5" fill="#ea2a2a"/>
<circle cx="334.05" cy="286.52" r="1.5" fill="#ea2a2a"/>
<circle cx="338.51" cy="286.88" r="1.5" fill="#ea2a2a"/>
<circle cx="342.96" cy="287.15" r="1.5" fill="#ea2a2a"/>
<circle cx="347.42" cy="287.37" r="1.5" fill="#ea2a2a"/>
<circle cx="351.88" cy="287.59" r="1.5" fill="#ea2a2a"/>
<circle cx="356.34" cy="287.82" r="1.5" fill="#ea2a2a"/>
<circle cx="360.79" cy="288.04" r="1.5" fill="#ea2a2a"/>
<circle cx="365.25" cy="288.26" r="1.5" fill="#ea2a2a"/>
<circle cx="369.71" cy="288.52" r="1.5" fill="#ea2a2a"/>
<circle cx="374.17" cy="288.78" r="1.5" fill="#ea2a2a"/>
<circle cx="378.62" cy="289.04" r="1.5" fill="#ea2a2a"/>
<circle cx="383.08" cy="289.30" r="1.5" fill="#ea2a2a"/>
<circle cx="387.54" cy="289.56" r="1.5" fill="#ea2a2a"/>
<circle cx="392.00" cy="289.82" r="1.5" fill="#ea2a2a"/>
<circle cx="396.45" cy="290.15" r="1.5" fill="#ea2a2a"/>
<circle cx="400.91" cy="290.59" r="1.5" fill="#ea2a2a"/>
<circle cx="405.37" cy="291.04" r="1.5" fill="#ea2a2a"/>
<circle cx="409.83" cy="291.48" r="1.5" fill="#ea2a2a"/>
<circle cx="414.28" cy="291.93" r="1.5" fill="#ea2a2a"/>
<circle cx="418.74" cy="291.81" r="1.5" fill="#ea2a2a"/>
<circle cx="423.20" cy="291.59" r="1.5" fill="#ea2a2a"/>
<circle cx="427.66" cy="291.37" r="1.5" fill="#ea2a2a"/>
<circle cx="432.11" cy="291.14" r="1.5" fill="#ea2a2a"/>
<circle cx="436.57" cy="290.92" r="1.5" fill="#ea2a2a"/>
<circle cx="441.03" cy="290.65" r="1.5" fill="#ea2a2a"/>
<circle cx="445.49" cy="290.20" r="1.5" fill="#ea2a2a"/>
<circle cx="449.94" cy="289.76" r="1.5" fill="#ea2a2a"/>
<circle cx="454.40" cy="289.31" r="1.5" fill="#ea2a2a"/>
<circle cx="458.86" cy="288.86" r="1.5" fill="#ea2a2a"/>
<circle cx="463.32" cy="288.42" r="1.5" fill="#ea2a2a"/>
<circle cx="467.77" cy="288.02" r="1.5" fill="#ea2a2a"/>
<circle cx="472.23" cy="287.65" r="1.5" fill="#ea2a2a"/>
<circle cx="476.69" cy="287.28" r="1.5" fill="#ea2a2a"/>
<circle cx="481.15" cy="286.90" r="1.5" fill="#ea2a2a"/>
<circle cx="485.60" cy="286.53" r="1.5" fill="#ea2a2a"/>
<circle cx="490.06" cy="286.16" r="1.5" fill="#ea2a2a"/>
<circle cx="494.52" cy="285.79" r="1.5" fill="#ea2a2a"/>
<circle cx="498.98" cy="286.25" r="1.5" fill="#ea2a2a"/>
<circle cx="503.43" cy="286.80" r="1.5" fill="#ea2a2a"/>
<circle cx="507.89" cy="287.36" r="1.5" fill="#ea2a2a"/>
<circle cx="512.35" cy="287.92" r="1.5" fill="#ea2a2a"/>
<circle cx="516.81" cy="288.48" r="1.5" fill="#ea2a2a"/>
<circle cx="521.26" cy="289.06" r="1.5" fill="#ea2a2a"/>
<circle cx="525.72" cy="289.64" r="1.5" fill="#ea2a2a"/>
<circle cx="530.18" cy="290.22" r="1.5" fill="#ea2a2a"/>
<circle cx="534.64" cy="290.80" r="1.5" fill="#ea2a2a"/>
<circle cx="539.09" cy="291.38" r="1.5" fill="#ea2a2a"/>
<circle cx="543.55" cy="291.50" r="1.5" fill="#ea2a2a"/>
<circle cx="548.01" cy="291.50" r="1.5" fill="#ea2a2a"/>
<circle cx="552.47" cy="291.50" r="1.5" fill="#ea2a2a"/>
<circle cx="556.92" cy="291.50" r="1.5" fill="#ea2a2a"/>
<circle cx="561.38" cy="291.69" r="1.5" fill="#ea2a2a"/>
<circle cx="565.84" cy="292.31" r="1.5" fill="#ea2a2a"/>
<circle cx="570.30" cy="292.93" r="1.5" fill="#ea2a2a"/>
<circle cx="574.75" cy="293.55" r="1.5" fill="#ea2a2a"/>
<circle cx="579.21" cy="294.17" r="1.5" fill="#ea2a2a"/>
<circle cx="583.67" cy="294.81" r="1.5" fill="#ea2a2a"/>
<circle cx="588.13" cy="294.78" r="1.5" fill="#ea2a2a"/>
<circle cx="592.58" cy="294.46" r="1.5" fill="#ea2a2a"/>
<circle cx="597.04" cy="294.14" r="1.5" fill="#ea2a2a"/>
<circle cx="601.50" cy="293.82" r="1.5" fill="#ea2a2a"/>
<circle cx="605.96" cy="293.50" r="1.5" fill="#ea2a2a"/>
<circle cx="610.41" cy="293.18" r="1.5" fill="#ea2a2a"/>
<circle cx="614.87" cy="292.87" r="1.5" fill="#ea2a2a"/>
<circle cx="619.33" cy="292.55" r="1.5" fill="#ea2a2a"/>
<circle cx="623.79" cy="292.35" r="1.5" fill="#ea2a2a"/>
<circle cx="628.25" cy="292.17" r="1.5" fill="#ea2a2a"/>
<circle cx="632.70" cy="291.99" r="1.5" fill="#ea2a2a"/>
<circle cx="637.16" cy="291.81" r="1.5" fill="#ea2a2a"/>
<circle cx="641.62" cy="291.64" r="1.5" fill="#ea2a2a"/>
<circle cx="646.07" cy="291.52" r="1.5" fill="#ea2a2a"/>
<circle cx="650.53" cy="291.61" r="1.5" fill="#ea2a2a"/>
<circle cx="654.99" cy="291.70" r="1.5" fill="#ea2a2a"/>
<circle cx="659.45" cy="291.79" r="1.5" fill="#ea2a2a"/>
<circle cx="663.90" cy="291.88" r="1.5" fill="#ea2a2a"/>
<circle cx="668.36" cy="291.97" r="1.5" fill="#ea2a2a"/>
<circle cx="672.82" cy="292.28" r="1.5" fill="#ea2a2a"/>
<circle cx="677.28" cy="292.73" r="1.5" fill="#ea2a2a"/>
<circle cx="681.73" cy="293.17" r="1.5" fill="#ea2a2a"/>
<circle cx="686.19" cy="293.62" r="1.5" fill="#ea2a2a"/>
<circle cx="690.65" cy="293.95" r="1.5" fill="#ea2a2a"/>
<circle cx="695.11" cy="293.62" r="1.5" fill="#ea2a2a"/>
<circle cx="699.56" cy="293.28" r="1.5" fill="#ea2a2a"/>
<circle cx="704.02" cy="292.95" r="1.5" fill="#ea2a2a"/>
<circle cx="708.48" cy="292.61" r="1.5" fill="#ea2a2a"/>
<circle cx="712.94" cy="292.50" r="1.5" fill="#ea2a2a"/>
<circle cx="717.39" cy="292.50" r="1.5" fill="#ea2a2a"/>
<circle cx="721.85" cy="292.50" r="1.5" fill="#ea2a2a"/>
<circle cx="726.31" cy="292.50" r="1.5" fill="#ea2a2a"/>
<circle cx="730.77" cy="292.56" r="1.5" fill="#ea2a2a"/>
<circle cx="735.22" cy="292.89" r="1.5" fill="#ea2a2a"/>
<circle cx="739.68" cy="293.23" r="1.5" fill="#ea2a2a"/>
<circle cx="744.14" cy="293.56" r="1.5" fill="#ea2a2a"/>
<circle cx="748.60" cy="293.89" r="1.5" fill="#ea2a2a"/>
<circle cx="753.05" cy="294.15" r="1.5" fill="#ea2a2a"/>
<circle cx="757.51" cy="294.38" r="1.5" fill="#ea2a2a"/>
<circle cx="761.97" cy="294.60" r="1.5" fill="#ea2a2a"/>
<circle cx="766.43" cy="294.82" r="1.5" fill="#ea2a2a"/>
<circle cx="770.88" cy="295.07" r="1.5" fill="#ea2a2a"/>
<circle cx="775.34" cy="295.40" r="1.5" fill="#ea2a2a"/>
<circle cx="779.80" cy="295.74" r="1.5" fill="#ea2a2a"/>
<circle cx="784.26" cy="296.07" r="1.5" fill="#ea2a2a"/>
<circle cx="788.71" cy="296.40" r="1.5" fill="#ea2a2a"/>
<circle cx="793.17" cy="296.50" r="1.5" fill="#ea2a2a"/>
<circle cx="797.63" cy="296.50" r="1.5" fill="#ea2a2a"/>
<circle cx="802.09" cy="296.50" r="1.5" fill="#ea2a2a"/>
<circle cx="806.54" cy="296.81" r="1.5" fill="#ea2a2a"/>
<circle cx="811.00" cy="297.70" r="1.5" fill="#ea2a2a"/>
<circle cx="815.46" cy="298.59" r="1.5" fill="#ea2a2a"/>
<circle cx="819.92" cy="299.48" r="1.5" fill="#ea2a2a"/>
<circle cx="824.37" cy="300.96" r="1.5" fill="#ea2a2a"/>
<circle cx="828.83" cy="302.44" r="1.5" fill="#ea2a2a"/>
<circle cx="833.29" cy="303.93" r="1.5" fill="#ea2a2a"/>
<circle cx="837.75" cy="305.25" r="1.5" fill="#ea2a2a"/>
<circle cx="842.20" cy="306.46" r="1.5" fill="#ea2a2a"/>
<circle cx="846.66" cy="307.67" r="1.5" fill="#ea2a2a"/>
<circle cx="851.12" cy="308.88" r="1.5" fill="#ea2a2a"/>
<circle cx="855.58" cy="310.09" r="1.5" fill="#ea2a2a"/>
<circle cx="860.03" cy="311.33" r="1.5" fill="#ea2a2a"/>
<circle cx="864.49" cy="312.60" r="1.5" fill="#ea2a2a"/>
<circle cx="868.95" cy="313.86" r="1.5" fill="#ea2a2a"/>
<circle cx="873.41" cy="315.13" r="1.5" fill="#ea2a2a"/>
</g>
<rect x="13.5" y="264.5" width="873.0" height="59.0" fill="none" stroke="#b9c6d3" stroke-width="1"/>
<line x1="886.5" y1="291.5" x2="889.5" y2="291.5" stroke="#b9c6d3" stroke-width="1"/>
<text x="894.3" y="297.8" class="pl" textLength="24" lengthAdjust="spacingAndGlyphs">-0.00</text>
<text x="15" y="275.5" class="ind" fill="#1c1c80" textLength="29" lengthAdjust="spacingAndGlyphs">MACD</text>
<g clip-path="url(#crsi)">
<g clip-path="url(#rsiband)"><polygon points="13.20,402.00 13.20,367.00 18.40,366.50 22.60,368.60 27.30,370.70 32.00,369.10 35.10,367.40 39.25,363.40 44.50,359.25 47.60,354.60 51.75,349.40 55.90,345.70 61.10,342.10 63.20,341.00 65.80,342.60 76.20,332.70 78.80,333.20 84.00,341.00 88.70,343.10 93.40,341.00 98.60,340.50 101.75,338.40 105.90,338.40 113.20,346.75 115.30,348.90 120.00,353.30 125.00,349.20 130.00,350.80 133.30,368.30 137.50,370.00 145.00,368.30 150.00,369.20 153.30,374.20 158.30,374.20 165.00,370.00 172.50,371.70 178.30,366.70 183.30,361.70 190.00,359.20 193.30,360.00 195.00,363.30 200.00,363.30 204.20,358.30 210.00,363.30 213.30,355.80 218.30,357.50 225.00,352.50 230.00,345.80 237.50,349.20 245.00,351.70 250.00,350.80 256.70,353.30 262.50,364.20 266.70,362.50 270.80,373.30 276.70,371.70 284.20,373.70 293.30,359.20 298.30,356.70 302.50,359.20 306.70,359.20 312.00,354.20 317.00,355.80 320.30,370.00 324.50,368.00 329.50,370.00 332.80,369.20 337.80,371.30 346.20,367.50 352.00,367.00 357.00,363.30 362.00,360.50 365.30,360.80 369.50,372.50 373.70,372.50 378.70,369.20 382.00,369.70 387.00,364.20 393.70,370.00 400.30,375.80 404.50,377.00 409.50,380.00 413.70,377.50 418.70,377.00 425.30,362.50 431.20,355.00 437.00,359.70 445.30,358.30 449.50,372.50 454.50,360.80 458.70,364.20 463.70,364.70 467.00,362.50 472.00,367.50 482.00,360.30 488.70,357.50 493.70,356.30 498.70,365.80 504.00,372.50 509.00,373.30 514.00,373.70 517.30,373.70 521.50,375.00 525.70,377.50 530.70,369.20 534.80,367.00 539.00,368.00 543.20,366.30 548.20,369.20 552.30,366.30 560.70,382.50 565.70,380.80 570.70,381.30 574.80,383.30 583.20,363.30 587.30,365.80 592.30,365.00 599.00,368.30 604.80,370.80 610.70,364.70 614.80,363.00 620.70,363.30 627.30,368.00 634.00,373.00 640.70,372.00 649.00,367.50 654.80,370.00 659.30,360.30 664.00,375.00 669.00,378.00 672.30,377.00 679.00,378.70 685.70,383.00 690.70,365.00 695.00,363.30 700.00,360.80 703.30,362.50 708.00,360.30 711.70,366.70 715.80,369.70 721.70,377.00 726.70,374.70 730.80,376.30 734.20,375.00 739.20,380.00 743.30,374.70 747.50,373.30 760.80,373.30 770.00,382.00 778.30,377.50 783.30,378.30 787.50,376.30 791.70,371.30 796.70,368.70 800.00,369.70 806.25,390.75 810.00,392.00 816.25,386.50 820.00,388.00 827.50,395.75 833.75,389.00 837.50,387.00 845.00,392.00 858.00,398.25 860.10,399.20 864.50,390.00 869.10,393.10 873.10,390.50 873.10,402.00" fill="url(#rsig)"/></g>
<line x1="35.5" y1="330.5" x2="35.5" y2="402.5" stroke="#7d8691" stroke-width="1" stroke-dasharray="3,3"/>
<line x1="62.5" y1="330.5" x2="62.5" y2="402.5" stroke="#7d8691" stroke-width="1" stroke-dasharray="3,3"/>
<line x1="88.5" y1="330.5" x2="88.5" y2="402.5" stroke="#7d8691" stroke-width="1" stroke-dasharray="3,3"/>
<line x1="115.5" y1="330.5" x2="115.5" y2="402.5" stroke="#7d8691" stroke-width="1" stroke-dasharray="3,3"/>
<line x1="142.5" y1="330.5" x2="142.5" y2="402.5" stroke="#7d8691" stroke-width="1" stroke-dasharray="3,3"/>
<line x1="169.5" y1="330.5" x2="169.5" y2="402.5" stroke="#7d8691" stroke-width="1" stroke-dasharray="3,3"/>
<line x1="195.5" y1="330.5" x2="195.5" y2="402.5" stroke="#7d8691" stroke-width="1" stroke-dasharray="3,3"/>
<line x1="222.5" y1="330.5" x2="222.5" y2="402.5" stroke="#7d8691" stroke-width="1" stroke-dasharray="3,3"/>
<line x1="249.5" y1="330.5" x2="249.5" y2="402.5" stroke="#7d8691" stroke-width="1" stroke-dasharray="3,3"/>
<line x1="276.5" y1="330.5" x2="276.5" y2="402.5" stroke="#7d8691" stroke-width="1" stroke-dasharray="3,3"/>
<line x1="302.5" y1="330.5" x2="302.5" y2="402.5" stroke="#7d8691" stroke-width="1" stroke-dasharray="3,3"/>
<line x1="329.5" y1="330.5" x2="329.5" y2="402.5" stroke="#7d8691" stroke-width="1" stroke-dasharray="3,3"/>
<line x1="356.5" y1="330.5" x2="356.5" y2="402.5" stroke="#7d8691" stroke-width="1" stroke-dasharray="3,3"/>
<line x1="382.5" y1="330.5" x2="382.5" y2="402.5" stroke="#7d8691" stroke-width="1" stroke-dasharray="3,3"/>
<line x1="409.5" y1="330.5" x2="409.5" y2="402.5" stroke="#7d8691" stroke-width="1" stroke-dasharray="3,3"/>
<line x1="436.5" y1="330.5" x2="436.5" y2="402.5" stroke="#7d8691" stroke-width="1" stroke-dasharray="3,3"/>
<line x1="463.5" y1="330.5" x2="463.5" y2="402.5" stroke="#7d8691" stroke-width="1" stroke-dasharray="3,3"/>
<line x1="489.5" y1="330.5" x2="489.5" y2="402.5" stroke="#7d8691" stroke-width="1" stroke-dasharray="3,3"/>
<line x1="516.5" y1="330.5" x2="516.5" y2="402.5" stroke="#7d8691" stroke-width="1" stroke-dasharray="3,3"/>
<line x1="543.5" y1="330.5" x2="543.5" y2="402.5" stroke="#7d8691" stroke-width="1" stroke-dasharray="3,3"/>
<line x1="570.5" y1="330.5" x2="570.5" y2="402.5" stroke="#7d8691" stroke-width="1" stroke-dasharray="3,3"/>
<line x1="596.5" y1="330.5" x2="596.5" y2="402.5" stroke="#7d8691" stroke-width="1" stroke-dasharray="3,3"/>
<line x1="623.5" y1="330.5" x2="623.5" y2="402.5" stroke="#7d8691" stroke-width="1" stroke-dasharray="3,3"/>
<line x1="650.5" y1="330.5" x2="650.5" y2="402.5" stroke="#7d8691" stroke-width="1" stroke-dasharray="3,3"/>
<line x1="677.5" y1="330.5" x2="677.5" y2="402.5" stroke="#7d8691" stroke-width="1" stroke-dasharray="3,3"/>
<line x1="703.5" y1="330.5" x2="703.5" y2="402.5" stroke="#7d8691" stroke-width="1" stroke-dasharray="3,3"/>
<line x1="730.5" y1="330.5" x2="730.5" y2="402.5" stroke="#7d8691" stroke-width="1" stroke-dasharray="3,3"/>
<line x1="757.5" y1="330.5" x2="757.5" y2="402.5" stroke="#7d8691" stroke-width="1" stroke-dasharray="3,3"/>
<line x1="783.5" y1="330.5" x2="783.5" y2="402.5" stroke="#7d8691" stroke-width="1" stroke-dasharray="3,3"/>
<line x1="810.5" y1="330.5" x2="810.5" y2="402.5" stroke="#7d8691" stroke-width="1" stroke-dasharray="3,3"/>
<line x1="837.5" y1="330.5" x2="837.5" y2="402.5" stroke="#7d8691" stroke-width="1" stroke-dasharray="3,3"/>
<line x1="864.5" y1="330.5" x2="864.5" y2="402.5" stroke="#7d8691" stroke-width="1" stroke-dasharray="3,3"/>
<line x1="13.5" y1="368.5" x2="886.5" y2="368.5" stroke="#7d8691" stroke-width="1" stroke-dasharray="3,3"/>
<line x1="489.5" y1="330.5" x2="489.5" y2="402.5" stroke="#8a96a2" stroke-width="1"/>
<line x1="13.5" y1="349" x2="873" y2="349" stroke="#1c1ca0" stroke-width="1.8"/>
<line x1="13.5" y1="389" x2="873" y2="389" stroke="#1c1ca0" stroke-width="1.8"/>
<polyline points="13.20,367.00 18.40,366.50 22.60,368.60 27.30,370.70 32.00,369.10 35.10,367.40 39.25,363.40 44.50,359.25 47.60,354.60 51.75,349.40" fill="none" stroke="#f28c30" stroke-width="1.05" stroke-linejoin="round"/>
<polyline points="51.75,349.40 55.90,345.70 61.10,342.10 63.20,341.00 65.80,342.60 76.20,332.70 78.80,333.20 84.00,341.00 88.70,343.10 93.40,341.00 98.60,340.50 101.75,338.40 105.90,338.40 113.20,346.75 115.30,348.90" fill="none" stroke="#c83ce0" stroke-width="1.05" stroke-linejoin="round"/>
<polyline points="115.30,348.90 120.00,353.30 125.00,349.20 130.00,350.80 133.30,368.30 137.50,370.00 145.00,368.30 150.00,369.20 153.30,374.20 158.30,374.20 165.00,370.00 172.50,371.70 178.30,366.70 183.30,361.70 190.00,359.20 193.30,360.00 195.00,363.30 200.00,363.30 204.20,358.30 210.00,363.30 213.30,355.80 218.30,357.50 225.00,352.50" fill="none" stroke="#f28c30" stroke-width="1.05" stroke-linejoin="round"/>
<polyline points="225.00,352.50 230.00,345.80" fill="none" stroke="#c83ce0" stroke-width="1.05" stroke-linejoin="round"/>
<polyline points="230.00,345.80 237.50,349.20 245.00,351.70 250.00,350.80 256.70,353.30 262.50,364.20 266.70,362.50 270.80,373.30 276.70,371.70 284.20,373.70 293.30,359.20 298.30,356.70 302.50,359.20 306.70,359.20 312.00,354.20 317.00,355.80 320.30,370.00 324.50,368.00 329.50,370.00 332.80,369.20 337.80,371.30 346.20,367.50 352.00,367.00 357.00,363.30 362.00,360.50 365.30,360.80 369.50,372.50 373.70,372.50 378.70,369.20 382.00,369.70 387.00,364.20 393.70,370.00 400.30,375.80 404.50,377.00 409.50,380.00 413.70,377.50 418.70,377.00 425.30,362.50 431.20,355.00 437.00,359.70 445.30,358.30 449.50,372.50 454.50,360.80 458.70,364.20 463.70,364.70 467.00,362.50 472.00,367.50 482.00,360.30 488.70,357.50 493.70,356.30 498.70,365.80 504.00,372.50 509.00,373.30 514.00,373.70 517.30,373.70 521.50,375.00 525.70,377.50 530.70,369.20 534.80,367.00 539.00,368.00 543.20,366.30 548.20,369.20 552.30,366.30 560.70,382.50 565.70,380.80 570.70,381.30 574.80,383.30 583.20,363.30 587.30,365.80 592.30,365.00 599.00,368.30 604.80,370.80 610.70,364.70 614.80,363.00 620.70,363.30 627.30,368.00 634.00,373.00 640.70,372.00 649.00,367.50 654.80,370.00 659.30,360.30 664.00,375.00 669.00,378.00 672.30,377.00 679.00,378.70 685.70,383.00 690.70,365.00 695.00,363.30 700.00,360.80 703.30,362.50 708.00,360.30 711.70,366.70 715.80,369.70 721.70,377.00 726.70,374.70 730.80,376.30 734.20,375.00 739.20,380.00 743.30,374.70 747.50,373.30 760.80,373.30 770.00,382.00 778.30,377.50 783.30,378.30 787.50,376.30 791.70,371.30 796.70,368.70 800.00,369.70" fill="none" stroke="#f28c30" stroke-width="1.05" stroke-linejoin="round"/>
<polyline points="800.00,369.70 806.25,390.75 810.00,392.00" fill="none" stroke="#3ee03e" stroke-width="1.05" stroke-linejoin="round"/>
<polyline points="810.00,392.00 816.25,386.50 820.00,388.00" fill="none" stroke="#f28c30" stroke-width="1.05" stroke-linejoin="round"/>
<polyline points="820.00,388.00 827.50,395.75 833.75,389.00" fill="none" stroke="#3ee03e" stroke-width="1.05" stroke-linejoin="round"/>
<polyline points="833.75,389.00 837.50,387.00" fill="none" stroke="#f28c30" stroke-width="1.05" stroke-linejoin="round"/>
<polyline points="837.50,387.00 845.00,392.00 858.00,398.25 860.10,399.20 864.50,390.00 869.10,393.10 873.10,390.50" fill="none" stroke="#3ee03e" stroke-width="1.05" stroke-linejoin="round"/>
</g>
<rect x="13.5" y="330.5" width="873.0" height="72.0" fill="none" stroke="#b9c6d3" stroke-width="1"/>
<line x1="886.5" y1="368.5" x2="889.5" y2="368.5" stroke="#b9c6d3" stroke-width="1"/>
<text x="894.6" y="374.8" class="pl" textLength="10.8" lengthAdjust="spacingAndGlyphs">50</text>
<text x="15" y="341.2" class="ind" fill="#e8893a" textLength="16" lengthAdjust="spacingAndGlyphs">RSI</text>
<line x1="35.5" y1="402.5" x2="35.5" y2="406" stroke="#b9c6d3" stroke-width="1"/>
<line x1="62.5" y1="402.5" x2="62.5" y2="406" stroke="#b9c6d3" stroke-width="1"/>
<line x1="88.5" y1="402.5" x2="88.5" y2="406" stroke="#b9c6d3" stroke-width="1"/>
<line x1="115.5" y1="402.5" x2="115.5" y2="406" stroke="#b9c6d3" stroke-width="1"/>
<line x1="142.5" y1="402.5" x2="142.5" y2="406" stroke="#b9c6d3" stroke-width="1"/>
<line x1="169.5" y1="402.5" x2="169.5" y2="406" stroke="#b9c6d3" stroke-width="1"/>
<line x1="195.5" y1="402.5" x2="195.5" y2="406" stroke="#b9c6d3" stroke-width="1"/>
<line x1="222.5" y1="402.5" x2="222.5" y2="406" stroke="#b9c6d3" stroke-width="1"/>
<line x1="249.5" y1="402.5" x2="249.5" y2="406" stroke="#b9c6d3" stroke-width="1"/>
<line x1="276.5" y1="402.5" x2="276.5" y2="406" stroke="#b9c6d3" stroke-width="1"/>
<line x1="302.5" y1="402.5" x2="302.5" y2="406" stroke="#b9c6d3" stroke-width="1"/>
<line x1="329.5" y1="402.5" x2="329.5" y2="406" stroke="#b9c6d3" stroke-width="1"/>
<line x1="356.5" y1="402.5" x2="356.5" y2="406" stroke="#b9c6d3" stroke-width="1"/>
<line x1="382.5" y1="402.5" x2="382.5" y2="406" stroke="#b9c6d3" stroke-width="1"/>
<line x1="409.5" y1="402.5" x2="409.5" y2="406" stroke="#b9c6d3" stroke-width="1"/>
<line x1="436.5" y1="402.5" x2="436.5" y2="406" stroke="#b9c6d3" stroke-width="1"/>
<line x1="463.5" y1="402.5" x2="463.5" y2="406" stroke="#b9c6d3" stroke-width="1"/>
<line x1="489.5" y1="402.5" x2="489.5" y2="406" stroke="#b9c6d3" stroke-width="1"/>
<line x1="516.5" y1="402.5" x2="516.5" y2="406" stroke="#b9c6d3" stroke-width="1"/>
<line x1="543.5" y1="402.5" x2="543.5" y2="406" stroke="#b9c6d3" stroke-width="1"/>
<line x1="570.5" y1="402.5" x2="570.5" y2="406" stroke="#b9c6d3" stroke-width="1"/>
<line x1="596.5" y1="402.5" x2="596.5" y2="406" stroke="#b9c6d3" stroke-width="1"/>
<line x1="623.5" y1="402.5" x2="623.5" y2="406" stroke="#b9c6d3" stroke-width="1"/>
<line x1="650.5" y1="402.5" x2="650.5" y2="406" stroke="#b9c6d3" stroke-width="1"/>
<line x1="677.5" y1="402.5" x2="677.5" y2="406" stroke="#b9c6d3" stroke-width="1"/>
<line x1="703.5" y1="402.5" x2="703.5" y2="406" stroke="#b9c6d3" stroke-width="1"/>
<line x1="730.5" y1="402.5" x2="730.5" y2="406" stroke="#b9c6d3" stroke-width="1"/>
<line x1="757.5" y1="402.5" x2="757.5" y2="406" stroke="#b9c6d3" stroke-width="1"/>
<line x1="783.5" y1="402.5" x2="783.5" y2="406" stroke="#b9c6d3" stroke-width="1"/>
<line x1="810.5" y1="402.5" x2="810.5" y2="406" stroke="#b9c6d3" stroke-width="1"/>
<line x1="837.5" y1="402.5" x2="837.5" y2="406" stroke="#b9c6d3" stroke-width="1"/>
<line x1="864.5" y1="402.5" x2="864.5" y2="406" stroke="#b9c6d3" stroke-width="1"/>
<line x1="14" y1="379" x2="14" y2="406" stroke="#dfe8ef" stroke-width="2"/>
<line x1="490" y1="379" x2="490" y2="406" stroke="#dfe8ef" stroke-width="2"/>
<rect x="14.5" y="379.5" width="62" height="19" rx="2" fill="#5d6c82" stroke="#a9b9c8" stroke-width="1"/>
<text x="21.5" y="392.6" class="ml" textLength="48.5" lengthAdjust="spacingAndGlyphs">Май 2021</text>
<rect x="490.5" y="379.5" width="69" height="19" rx="2" fill="#5d6c82" stroke="#a9b9c8" stroke-width="1"/>
<text x="497" y="392.5" class="ml" textLength="56" lengthAdjust="spacingAndGlyphs">Июнь 2021</text>
<text x="34.5" y="424.8" class="dl" textLength="5.6" lengthAdjust="spacingAndGlyphs">7</text>
<text x="61.5" y="424.8" class="dl" textLength="11.2" lengthAdjust="spacingAndGlyphs">10</text>
<text x="87.5" y="424.8" class="dl" textLength="11.2" lengthAdjust="spacingAndGlyphs">11</text>
<text x="114.5" y="424.8" class="dl" textLength="11.2" lengthAdjust="spacingAndGlyphs">12</text>
<text x="141.5" y="424.8" class="dl" textLength="11.2" lengthAdjust="spacingAndGlyphs">13</text>
<text x="168.5" y="424.8" class="dl" textLength="11.2" lengthAdjust="spacingAndGlyphs">14</text>
<text x="194.5" y="424.8" class="dl" textLength="11.2" lengthAdjust="spacingAndGlyphs">17</text>
<text x="221.5" y="424.8" class="dl" textLength="11.2" lengthAdjust="spacingAndGlyphs">18</text>
<text x="248.5" y="424.8" class="dl" textLength="11.2" lengthAdjust="spacingAndGlyphs">19</text>
<text x="275.5" y="424.8" class="dl" textLength="11.2" lengthAdjust="spacingAndGlyphs">20</text>
<text x="301.5" y="424.8" class="dl" textLength="11.2" lengthAdjust="spacingAndGlyphs">21</text>
<text x="328.5" y="424.8" class="dl" textLength="11.2" lengthAdjust="spacingAndGlyphs">24</text>
<text x="355.5" y="424.8" class="dl" textLength="11.2" lengthAdjust="spacingAndGlyphs">25</text>
<text x="381.5" y="424.8" class="dl" textLength="11.2" lengthAdjust="spacingAndGlyphs">26</text>
<text x="408.5" y="424.8" class="dl" textLength="11.2" lengthAdjust="spacingAndGlyphs">27</text>
<text x="435.5" y="424.8" class="dl" textLength="11.2" lengthAdjust="spacingAndGlyphs">28</text>
<text x="462.5" y="424.8" class="dl" textLength="11.2" lengthAdjust="spacingAndGlyphs">31</text>
<text x="488.5" y="424.8" class="dl" textLength="5.6" lengthAdjust="spacingAndGlyphs">1</text>
<text x="515.5" y="424.8" class="dl" textLength="5.6" lengthAdjust="spacingAndGlyphs">2</text>
<text x="542.5" y="424.8" class="dl" textLength="5.6" lengthAdjust="spacingAndGlyphs">3</text>
<text x="569.5" y="424.8" class="dl" textLength="5.6" lengthAdjust="spacingAndGlyphs">4</text>
<text x="595.5" y="424.8" class="dl" textLength="5.6" lengthAdjust="spacingAndGlyphs">7</text>
<text x="622.5" y="424.8" class="dl" textLength="5.6" lengthAdjust="spacingAndGlyphs">8</text>
<text x="649.5" y="424.8" class="dl" textLength="5.6" lengthAdjust="spacingAndGlyphs">9</text>
<text x="676.5" y="424.8" class="dl" textLength="11.2" lengthAdjust="spacingAndGlyphs">10</text>
<text x="702.5" y="424.8" class="dl" textLength="11.2" lengthAdjust="spacingAndGlyphs">11</text>
<text x="729.5" y="424.8" class="dl" textLength="11.2" lengthAdjust="spacingAndGlyphs">14</text>
<text x="756.5" y="424.8" class="dl" textLength="11.2" lengthAdjust="spacingAndGlyphs">15</text>
<text x="782.5" y="424.8" class="dl" textLength="11.2" lengthAdjust="spacingAndGlyphs">16</text>
<text x="809.5" y="424.8" class="dl" textLength="11.2" lengthAdjust="spacingAndGlyphs">17</text>
<text x="836.5" y="424.8" class="dl" textLength="11.2" lengthAdjust="spacingAndGlyphs">18</text>
<text x="863.5" y="424.8" class="dl" textLength="11.2" lengthAdjust="spacingAndGlyphs">21</text>
</svg>
</body></html>
